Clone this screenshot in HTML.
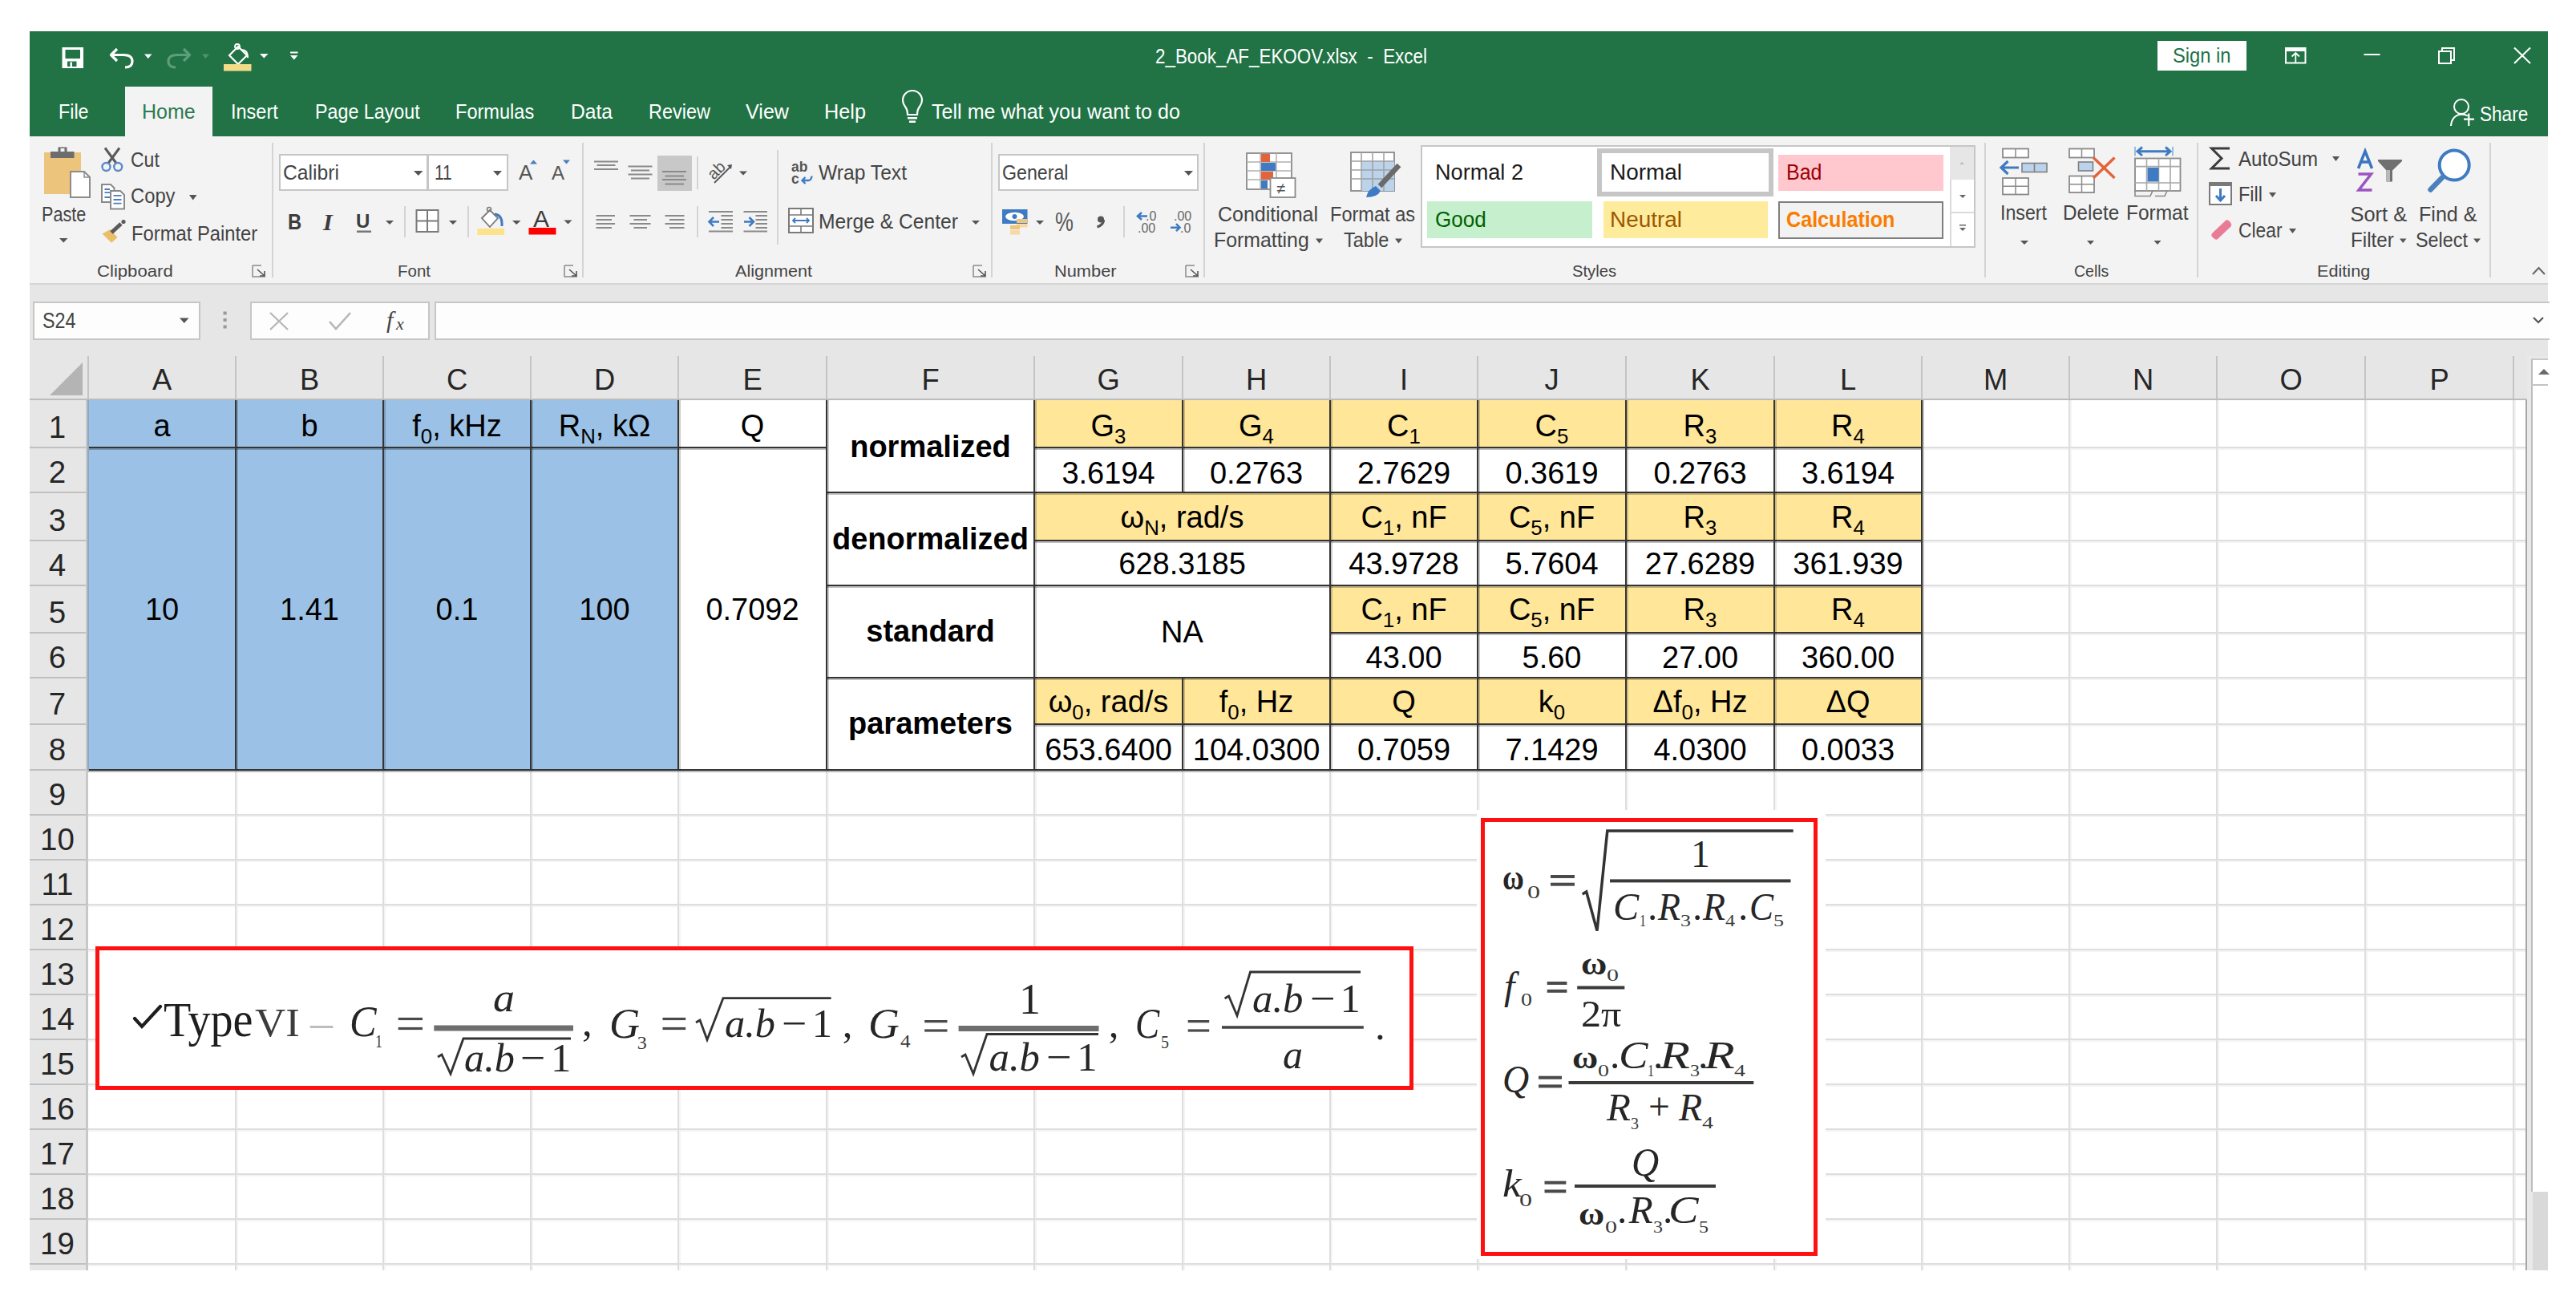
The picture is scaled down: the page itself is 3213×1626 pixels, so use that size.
<!DOCTYPE html>
<html><head><meta charset="utf-8"><style>
html,body{margin:0;padding:0}
body{width:3213px;height:1626px;position:relative;overflow:hidden;background:#fff;font-family:"Liberation Sans",sans-serif}
svg{position:absolute;overflow:visible}
</style></head><body>
<div style="position:absolute;left:37px;top:39px;width:3141px;height:131px;background:#217346;"></div>
<div style="position:absolute;left:156px;top:108px;width:109px;height:62px;background:#f3f3f3;"></div>
<div style="position:absolute;left:37px;top:170px;width:3141px;height:183px;background:#f3f3f3;"></div>
<div style="position:absolute;left:37px;top:353px;width:3141px;height:2px;background:#d5d5d5;"></div>
<div style="position:absolute;left:37px;top:355px;width:3141px;height:144px;background:#e6e6e6;"></div>
<div style="position:absolute;left:41px;top:376px;width:209px;height:48px;background:#fdfdfd;box-sizing:border-box;border:2px solid #c6c6c6"></div>
<div style="position:absolute;left:312px;top:376px;width:224px;height:48px;background:#fdfdfd;box-sizing:border-box;border:2px solid #c6c6c6"></div>
<div style="position:absolute;left:542px;top:376px;width:2638px;height:48px;background:#fdfdfd;box-sizing:border-box;border:2px solid #c6c6c6;border-right:none"></div>
<div style="position:absolute;left:110px;top:499px;width:3042px;height:1085px;background:#ffffff;"></div>
<div style="position:absolute;left:37px;top:499px;width:73px;height:1085px;background:#e6e6e6;"></div>
<div style="position:absolute;left:107px;top:499px;width:3px;height:1085px;background:#c8c8c8;"></div>
<div style="position:absolute;left:109px;top:444px;width:2px;height:55px;background:#c4c4c4;"></div>
<div style="position:absolute;left:293px;top:444px;width:2px;height:55px;background:#c4c4c4;"></div>
<div style="position:absolute;left:477px;top:444px;width:2px;height:55px;background:#c4c4c4;"></div>
<div style="position:absolute;left:661px;top:444px;width:2px;height:55px;background:#c4c4c4;"></div>
<div style="position:absolute;left:845px;top:444px;width:2px;height:55px;background:#c4c4c4;"></div>
<div style="position:absolute;left:1030px;top:444px;width:2px;height:55px;background:#c4c4c4;"></div>
<div style="position:absolute;left:1289px;top:444px;width:2px;height:55px;background:#c4c4c4;"></div>
<div style="position:absolute;left:1474px;top:444px;width:2px;height:55px;background:#c4c4c4;"></div>
<div style="position:absolute;left:1658px;top:444px;width:2px;height:55px;background:#c4c4c4;"></div>
<div style="position:absolute;left:1842px;top:444px;width:2px;height:55px;background:#c4c4c4;"></div>
<div style="position:absolute;left:2027px;top:444px;width:2px;height:55px;background:#c4c4c4;"></div>
<div style="position:absolute;left:2212px;top:444px;width:2px;height:55px;background:#c4c4c4;"></div>
<div style="position:absolute;left:2396px;top:444px;width:2px;height:55px;background:#c4c4c4;"></div>
<div style="position:absolute;left:2580px;top:444px;width:2px;height:55px;background:#c4c4c4;"></div>
<div style="position:absolute;left:2764px;top:444px;width:2px;height:55px;background:#c4c4c4;"></div>
<div style="position:absolute;left:2949px;top:444px;width:2px;height:55px;background:#c4c4c4;"></div>
<div style="position:absolute;left:3134px;top:444px;width:2px;height:55px;background:#c4c4c4;"></div>
<div style="position:absolute;left:37px;top:497px;width:3115px;height:2px;background:#bcbcbc;"></div>
<svg style="left:62px;top:452px" width="42" height="41"><path d="M41 0 L41 41 L0 41 Z" fill="#b4b4b4"/></svg>
<div style="position:absolute;left:295px;top:499px;width:2px;height:1085px;background:#f4f4f4;"></div>
<div style="position:absolute;left:479px;top:499px;width:2px;height:1085px;background:#f4f4f4;"></div>
<div style="position:absolute;left:663px;top:499px;width:2px;height:1085px;background:#f4f4f4;"></div>
<div style="position:absolute;left:847px;top:499px;width:2px;height:1085px;background:#f4f4f4;"></div>
<div style="position:absolute;left:1032px;top:499px;width:2px;height:1085px;background:#f4f4f4;"></div>
<div style="position:absolute;left:1291px;top:499px;width:2px;height:1085px;background:#f4f4f4;"></div>
<div style="position:absolute;left:1476px;top:499px;width:2px;height:1085px;background:#f4f4f4;"></div>
<div style="position:absolute;left:1660px;top:499px;width:2px;height:1085px;background:#f4f4f4;"></div>
<div style="position:absolute;left:1844px;top:499px;width:2px;height:1085px;background:#f4f4f4;"></div>
<div style="position:absolute;left:2029px;top:499px;width:2px;height:1085px;background:#f4f4f4;"></div>
<div style="position:absolute;left:2214px;top:499px;width:2px;height:1085px;background:#f4f4f4;"></div>
<div style="position:absolute;left:2398px;top:499px;width:2px;height:1085px;background:#f4f4f4;"></div>
<div style="position:absolute;left:2582px;top:499px;width:2px;height:1085px;background:#f4f4f4;"></div>
<div style="position:absolute;left:2766px;top:499px;width:2px;height:1085px;background:#f4f4f4;"></div>
<div style="position:absolute;left:2951px;top:499px;width:2px;height:1085px;background:#f4f4f4;"></div>
<div style="position:absolute;left:3136px;top:499px;width:2px;height:1085px;background:#f4f4f4;"></div>
<div style="position:absolute;left:110px;top:559px;width:3041px;height:2px;background:#f4f4f4;"></div>
<div style="position:absolute;left:110px;top:615px;width:3041px;height:2px;background:#f4f4f4;"></div>
<div style="position:absolute;left:110px;top:675px;width:3041px;height:2px;background:#f4f4f4;"></div>
<div style="position:absolute;left:110px;top:731px;width:3041px;height:2px;background:#f4f4f4;"></div>
<div style="position:absolute;left:110px;top:790px;width:3041px;height:2px;background:#f4f4f4;"></div>
<div style="position:absolute;left:110px;top:846px;width:3041px;height:2px;background:#f4f4f4;"></div>
<div style="position:absolute;left:110px;top:904px;width:3041px;height:2px;background:#f4f4f4;"></div>
<div style="position:absolute;left:110px;top:961px;width:3041px;height:2px;background:#f4f4f4;"></div>
<div style="position:absolute;left:110px;top:1017px;width:3041px;height:2px;background:#f4f4f4;"></div>
<div style="position:absolute;left:110px;top:1073px;width:3041px;height:2px;background:#f4f4f4;"></div>
<div style="position:absolute;left:110px;top:1129px;width:3041px;height:2px;background:#f4f4f4;"></div>
<div style="position:absolute;left:110px;top:1185px;width:3041px;height:2px;background:#f4f4f4;"></div>
<div style="position:absolute;left:110px;top:1241px;width:3041px;height:2px;background:#f4f4f4;"></div>
<div style="position:absolute;left:110px;top:1297px;width:3041px;height:2px;background:#f4f4f4;"></div>
<div style="position:absolute;left:110px;top:1353px;width:3041px;height:2px;background:#f4f4f4;"></div>
<div style="position:absolute;left:110px;top:1409px;width:3041px;height:2px;background:#f4f4f4;"></div>
<div style="position:absolute;left:110px;top:1465px;width:3041px;height:2px;background:#f4f4f4;"></div>
<div style="position:absolute;left:110px;top:1521px;width:3041px;height:2px;background:#f4f4f4;"></div>
<div style="position:absolute;left:110px;top:1577px;width:3041px;height:2px;background:#f4f4f4;"></div>
<div style="position:absolute;left:293px;top:499px;width:2px;height:1085px;background:#dedede;"></div>
<div style="position:absolute;left:477px;top:499px;width:2px;height:1085px;background:#dedede;"></div>
<div style="position:absolute;left:661px;top:499px;width:2px;height:1085px;background:#dedede;"></div>
<div style="position:absolute;left:845px;top:499px;width:2px;height:1085px;background:#dedede;"></div>
<div style="position:absolute;left:1030px;top:499px;width:2px;height:1085px;background:#dedede;"></div>
<div style="position:absolute;left:1289px;top:499px;width:2px;height:1085px;background:#dedede;"></div>
<div style="position:absolute;left:1474px;top:499px;width:2px;height:1085px;background:#dedede;"></div>
<div style="position:absolute;left:1658px;top:499px;width:2px;height:1085px;background:#dedede;"></div>
<div style="position:absolute;left:1842px;top:499px;width:2px;height:1085px;background:#dedede;"></div>
<div style="position:absolute;left:2027px;top:499px;width:2px;height:1085px;background:#dedede;"></div>
<div style="position:absolute;left:2212px;top:499px;width:2px;height:1085px;background:#dedede;"></div>
<div style="position:absolute;left:2396px;top:499px;width:2px;height:1085px;background:#dedede;"></div>
<div style="position:absolute;left:2580px;top:499px;width:2px;height:1085px;background:#dedede;"></div>
<div style="position:absolute;left:2764px;top:499px;width:2px;height:1085px;background:#dedede;"></div>
<div style="position:absolute;left:2949px;top:499px;width:2px;height:1085px;background:#dedede;"></div>
<div style="position:absolute;left:3134px;top:499px;width:2px;height:1085px;background:#dedede;"></div>
<div style="position:absolute;left:110px;top:557px;width:3041px;height:2px;background:#dedede;"></div>
<div style="position:absolute;left:110px;top:613px;width:3041px;height:2px;background:#dedede;"></div>
<div style="position:absolute;left:110px;top:673px;width:3041px;height:2px;background:#dedede;"></div>
<div style="position:absolute;left:110px;top:729px;width:3041px;height:2px;background:#dedede;"></div>
<div style="position:absolute;left:110px;top:788px;width:3041px;height:2px;background:#dedede;"></div>
<div style="position:absolute;left:110px;top:844px;width:3041px;height:2px;background:#dedede;"></div>
<div style="position:absolute;left:110px;top:902px;width:3041px;height:2px;background:#dedede;"></div>
<div style="position:absolute;left:110px;top:959px;width:3041px;height:2px;background:#dedede;"></div>
<div style="position:absolute;left:110px;top:1015px;width:3041px;height:2px;background:#dedede;"></div>
<div style="position:absolute;left:110px;top:1071px;width:3041px;height:2px;background:#dedede;"></div>
<div style="position:absolute;left:110px;top:1127px;width:3041px;height:2px;background:#dedede;"></div>
<div style="position:absolute;left:110px;top:1183px;width:3041px;height:2px;background:#dedede;"></div>
<div style="position:absolute;left:110px;top:1239px;width:3041px;height:2px;background:#dedede;"></div>
<div style="position:absolute;left:110px;top:1295px;width:3041px;height:2px;background:#dedede;"></div>
<div style="position:absolute;left:110px;top:1351px;width:3041px;height:2px;background:#dedede;"></div>
<div style="position:absolute;left:110px;top:1407px;width:3041px;height:2px;background:#dedede;"></div>
<div style="position:absolute;left:110px;top:1463px;width:3041px;height:2px;background:#dedede;"></div>
<div style="position:absolute;left:110px;top:1519px;width:3041px;height:2px;background:#dedede;"></div>
<div style="position:absolute;left:110px;top:1575px;width:3041px;height:2px;background:#dedede;"></div>
<div style="position:absolute;left:37px;top:557px;width:70px;height:2px;background:#c0c0c0;"></div>
<div style="position:absolute;left:37px;top:613px;width:70px;height:2px;background:#c0c0c0;"></div>
<div style="position:absolute;left:37px;top:673px;width:70px;height:2px;background:#c0c0c0;"></div>
<div style="position:absolute;left:37px;top:729px;width:70px;height:2px;background:#c0c0c0;"></div>
<div style="position:absolute;left:37px;top:788px;width:70px;height:2px;background:#c0c0c0;"></div>
<div style="position:absolute;left:37px;top:844px;width:70px;height:2px;background:#c0c0c0;"></div>
<div style="position:absolute;left:37px;top:902px;width:70px;height:2px;background:#c0c0c0;"></div>
<div style="position:absolute;left:37px;top:959px;width:70px;height:2px;background:#c0c0c0;"></div>
<div style="position:absolute;left:37px;top:1015px;width:70px;height:2px;background:#c0c0c0;"></div>
<div style="position:absolute;left:37px;top:1071px;width:70px;height:2px;background:#c0c0c0;"></div>
<div style="position:absolute;left:37px;top:1127px;width:70px;height:2px;background:#c0c0c0;"></div>
<div style="position:absolute;left:37px;top:1183px;width:70px;height:2px;background:#c0c0c0;"></div>
<div style="position:absolute;left:37px;top:1239px;width:70px;height:2px;background:#c0c0c0;"></div>
<div style="position:absolute;left:37px;top:1295px;width:70px;height:2px;background:#c0c0c0;"></div>
<div style="position:absolute;left:37px;top:1351px;width:70px;height:2px;background:#c0c0c0;"></div>
<div style="position:absolute;left:37px;top:1407px;width:70px;height:2px;background:#c0c0c0;"></div>
<div style="position:absolute;left:37px;top:1463px;width:70px;height:2px;background:#c0c0c0;"></div>
<div style="position:absolute;left:37px;top:1519px;width:70px;height:2px;background:#c0c0c0;"></div>
<div style="position:absolute;left:37px;top:1575px;width:70px;height:2px;background:#c0c0c0;"></div>
<div style="position:absolute;left:3150px;top:499px;width:2px;height:1085px;background:#a6a6a6;"></div>
<div style="position:absolute;left:3152px;top:444px;width:26px;height:1140px;background:#e9e9e9;"></div>
<div style="position:absolute;left:3157px;top:448px;width:21px;height:1038px;background:#ffffff;box-sizing:border-box;border-left:2px solid #bdbdbd"></div>
<div style="position:absolute;left:3157px;top:479px;width:21px;height:2px;background:#c4c4c4;"></div>
<div style="position:absolute;left:3157px;top:447px;width:21px;height:2px;background:#c8c8c8;"></div>
<div style="position:absolute;left:3159px;top:1486px;width:19px;height:98px;background:#d9d9d9;"></div>
<svg style="left:3166px;top:458px" width="14" height="10"><path d="M0 9 L7 2 L14 9 Z" fill="#6a6a6a"/></svg>
<div style="position:absolute;left:110px;top:499px;width:2287px;height:461px;background:#ffffff;"></div>
<div style="position:absolute;left:110px;top:499px;width:736px;height:461px;background:#9bc2e6;"></div>
<div style="position:absolute;left:1290px;top:499px;width:1107px;height:59px;background:#ffe699;"></div>
<div style="position:absolute;left:1290px;top:614px;width:1107px;height:60px;background:#ffe699;"></div>
<div style="position:absolute;left:1659px;top:730px;width:738px;height:59px;background:#ffe699;"></div>
<div style="position:absolute;left:1290px;top:845px;width:1107px;height:58px;background:#ffe699;"></div>
<div style="position:absolute;left:110px;top:559px;width:922px;height:2px;background:rgba(0,0,0,0.24);"></div>
<div style="position:absolute;left:110px;top:557px;width:922px;height:2px;background:#343434;"></div>
<div style="position:absolute;left:1290px;top:559px;width:1108px;height:2px;background:rgba(0,0,0,0.24);"></div>
<div style="position:absolute;left:1290px;top:557px;width:1108px;height:2px;background:#343434;"></div>
<div style="position:absolute;left:1031px;top:615px;width:1367px;height:2px;background:rgba(0,0,0,0.24);"></div>
<div style="position:absolute;left:1031px;top:613px;width:1367px;height:2px;background:#343434;"></div>
<div style="position:absolute;left:1290px;top:675px;width:1108px;height:2px;background:rgba(0,0,0,0.24);"></div>
<div style="position:absolute;left:1290px;top:673px;width:1108px;height:2px;background:#343434;"></div>
<div style="position:absolute;left:1031px;top:731px;width:1367px;height:2px;background:rgba(0,0,0,0.24);"></div>
<div style="position:absolute;left:1031px;top:729px;width:1367px;height:2px;background:#343434;"></div>
<div style="position:absolute;left:1659px;top:790px;width:739px;height:2px;background:rgba(0,0,0,0.24);"></div>
<div style="position:absolute;left:1659px;top:788px;width:739px;height:2px;background:#343434;"></div>
<div style="position:absolute;left:1031px;top:846px;width:1367px;height:2px;background:rgba(0,0,0,0.24);"></div>
<div style="position:absolute;left:1031px;top:844px;width:1367px;height:2px;background:#343434;"></div>
<div style="position:absolute;left:1290px;top:904px;width:1108px;height:2px;background:rgba(0,0,0,0.24);"></div>
<div style="position:absolute;left:1290px;top:902px;width:1108px;height:2px;background:#343434;"></div>
<div style="position:absolute;left:110px;top:961px;width:2288px;height:2px;background:rgba(0,0,0,0.24);"></div>
<div style="position:absolute;left:110px;top:959px;width:2288px;height:2px;background:#343434;"></div>
<div style="position:absolute;left:109px;top:499px;width:2px;height:462px;background:#8fa6bd;"></div>
<div style="position:absolute;left:295px;top:499px;width:2px;height:462px;background:rgba(0,0,0,0.2);"></div>
<div style="position:absolute;left:293px;top:499px;width:2px;height:462px;background:#343434;"></div>
<div style="position:absolute;left:479px;top:499px;width:2px;height:462px;background:rgba(0,0,0,0.2);"></div>
<div style="position:absolute;left:477px;top:499px;width:2px;height:462px;background:#343434;"></div>
<div style="position:absolute;left:663px;top:499px;width:2px;height:462px;background:rgba(0,0,0,0.2);"></div>
<div style="position:absolute;left:661px;top:499px;width:2px;height:462px;background:#343434;"></div>
<div style="position:absolute;left:847px;top:499px;width:2px;height:462px;background:rgba(0,0,0,0.2);"></div>
<div style="position:absolute;left:845px;top:499px;width:2px;height:462px;background:#343434;"></div>
<div style="position:absolute;left:1032px;top:499px;width:2px;height:462px;background:rgba(0,0,0,0.2);"></div>
<div style="position:absolute;left:1030px;top:499px;width:2px;height:462px;background:#343434;"></div>
<div style="position:absolute;left:1291px;top:499px;width:2px;height:462px;background:rgba(0,0,0,0.2);"></div>
<div style="position:absolute;left:1289px;top:499px;width:2px;height:462px;background:#343434;"></div>
<div style="position:absolute;left:1660px;top:499px;width:2px;height:462px;background:rgba(0,0,0,0.2);"></div>
<div style="position:absolute;left:1658px;top:499px;width:2px;height:462px;background:#343434;"></div>
<div style="position:absolute;left:1844px;top:499px;width:2px;height:462px;background:rgba(0,0,0,0.2);"></div>
<div style="position:absolute;left:1842px;top:499px;width:2px;height:462px;background:#343434;"></div>
<div style="position:absolute;left:2029px;top:499px;width:2px;height:462px;background:rgba(0,0,0,0.2);"></div>
<div style="position:absolute;left:2027px;top:499px;width:2px;height:462px;background:#343434;"></div>
<div style="position:absolute;left:2214px;top:499px;width:2px;height:462px;background:rgba(0,0,0,0.2);"></div>
<div style="position:absolute;left:2212px;top:499px;width:2px;height:462px;background:#343434;"></div>
<div style="position:absolute;left:2398px;top:499px;width:2px;height:462px;background:rgba(0,0,0,0.2);"></div>
<div style="position:absolute;left:2396px;top:499px;width:2px;height:462px;background:#343434;"></div>
<div style="position:absolute;left:1476px;top:499px;width:2px;height:116px;background:rgba(0,0,0,0.2);"></div>
<div style="position:absolute;left:1474px;top:499px;width:2px;height:116px;background:#343434;"></div>
<div style="position:absolute;left:1476px;top:845px;width:2px;height:116px;background:rgba(0,0,0,0.2);"></div>
<div style="position:absolute;left:1474px;top:845px;width:2px;height:116px;background:#343434;"></div>
<div style="position:absolute;left:119px;top:1180px;width:1644px;height:179px;background:#fff;box-sizing:border-box;border:5px solid #ff1010"></div>
<div style="position:absolute;left:1842px;top:1010px;width:435px;height:560px;background:#fff;"></div>
<div style="position:absolute;left:1847px;top:1020px;width:420px;height:546px;background:#fff;box-sizing:border-box;border:5px solid #ff1010"></div>
<div style="position:absolute;left:2691px;top:51px;width:111px;height:37px;background:#ffffff;"></div>
<div style="position:absolute;left:348px;top:192px;width:186px;height:46px;background:#ffffff;box-sizing:border-box;border:2px solid #c6c6c6"></div>
<div style="position:absolute;left:533px;top:192px;width:101px;height:46px;background:#ffffff;box-sizing:border-box;border:2px solid #c6c6c6"></div>
<div style="position:absolute;left:1245px;top:192px;width:250px;height:46px;background:#ffffff;box-sizing:border-box;border:2px solid #c6c6c6"></div>
<div style="position:absolute;left:1772px;top:181px;width:692px;height:128px;background:#ffffff;box-sizing:border-box;border:2px solid #c6c6c6"></div>
<div style="position:absolute;left:1992px;top:185px;width:220px;height:60px;background:#ffffff;box-sizing:border-box;border:6px solid #c6c6c6"></div>
<div style="position:absolute;left:2218px;top:193px;width:206px;height:45px;background:#ffc7ce;"></div>
<div style="position:absolute;left:1780px;top:251px;width:206px;height:46px;background:#c6efce;"></div>
<div style="position:absolute;left:2000px;top:251px;width:205px;height:46px;background:#ffeb9c;"></div>
<div style="position:absolute;left:2218px;top:251px;width:206px;height:47px;background:#f2f2f2;box-sizing:border-box;border:2px solid #7f7f7f"></div>
<div style="position:absolute;left:2432px;top:183px;width:30px;height:41px;background:#e6e6e6;"></div>
<div style="position:absolute;left:2432px;top:224px;width:2px;height:83px;background:#dadada;"></div>
<div style="position:absolute;left:2434px;top:264px;width:28px;height:2px;background:#dadada;"></div>
<div style="position:absolute;left:339px;top:178px;width:2px;height:168px;background:#d4d4d4;"></div>
<div style="position:absolute;left:726px;top:178px;width:2px;height:168px;background:#d4d4d4;"></div>
<div style="position:absolute;left:1236px;top:178px;width:2px;height:168px;background:#d4d4d4;"></div>
<div style="position:absolute;left:1501px;top:178px;width:2px;height:168px;background:#d4d4d4;"></div>
<div style="position:absolute;left:2475px;top:178px;width:2px;height:168px;background:#d4d4d4;"></div>
<div style="position:absolute;left:2740px;top:178px;width:2px;height:168px;background:#d4d4d4;"></div>
<div style="position:absolute;left:3105px;top:178px;width:2px;height:168px;background:#d4d4d4;"></div>
<div style="position:absolute;left:869px;top:195px;width:2px;height:41px;background:#d4d4d4;"></div>
<div style="position:absolute;left:869px;top:257px;width:2px;height:39px;background:#d4d4d4;"></div>
<div style="position:absolute;left:969px;top:187px;width:2px;height:118px;background:#d4d4d4;"></div>
<div style="position:absolute;left:504px;top:257px;width:2px;height:39px;background:#d4d4d4;"></div>
<div style="position:absolute;left:583px;top:257px;width:2px;height:39px;background:#d4d4d4;"></div>
<div style="position:absolute;left:1401px;top:257px;width:2px;height:39px;background:#d4d4d4;"></div>
<div style="position:absolute;left:820px;top:194px;width:43px;height:44px;background:#c8c8c8;"></div>
<div style="position:absolute;left:189.9px;top:455.6px;font-family:'Liberation Sans';font-size:36.34px;line-height:1;white-space:nowrap;font-weight:400;font-style:normal;color:#262626;">A</div>
<div style="position:absolute;left:373.9px;top:455.6px;font-family:'Liberation Sans';font-size:36.34px;line-height:1;white-space:nowrap;font-weight:400;font-style:normal;color:#262626;">B</div>
<div style="position:absolute;left:556.9px;top:455.6px;font-family:'Liberation Sans';font-size:36.34px;line-height:1;white-space:nowrap;font-weight:400;font-style:normal;color:#262626;">C</div>
<div style="position:absolute;left:740.9px;top:455.6px;font-family:'Liberation Sans';font-size:36.34px;line-height:1;white-space:nowrap;font-weight:400;font-style:normal;color:#262626;">D</div>
<div style="position:absolute;left:926.4px;top:455.6px;font-family:'Liberation Sans';font-size:36.34px;line-height:1;white-space:nowrap;font-weight:400;font-style:normal;color:#262626;">E</div>
<div style="position:absolute;left:1149.4px;top:455.6px;font-family:'Liberation Sans';font-size:36.34px;line-height:1;white-space:nowrap;font-weight:400;font-style:normal;color:#262626;">F</div>
<div style="position:absolute;left:1368.4px;top:455.6px;font-family:'Liberation Sans';font-size:36.34px;line-height:1;white-space:nowrap;font-weight:400;font-style:normal;color:#262626;">G</div>
<div style="position:absolute;left:1553.9px;top:455.6px;font-family:'Liberation Sans';font-size:36.34px;line-height:1;white-space:nowrap;font-weight:400;font-style:normal;color:#262626;">H</div>
<div style="position:absolute;left:1745.9px;top:455.6px;font-family:'Liberation Sans';font-size:36.34px;line-height:1;white-space:nowrap;font-weight:400;font-style:normal;color:#262626;">I</div>
<div style="position:absolute;left:1926.4px;top:455.6px;font-family:'Liberation Sans';font-size:36.34px;line-height:1;white-space:nowrap;font-weight:400;font-style:normal;color:#262626;">J</div>
<div style="position:absolute;left:2108.4px;top:455.6px;font-family:'Liberation Sans';font-size:36.34px;line-height:1;white-space:nowrap;font-weight:400;font-style:normal;color:#262626;">K</div>
<div style="position:absolute;left:2294.9px;top:455.6px;font-family:'Liberation Sans';font-size:36.34px;line-height:1;white-space:nowrap;font-weight:400;font-style:normal;color:#262626;">L</div>
<div style="position:absolute;left:2473.9px;top:455.6px;font-family:'Liberation Sans';font-size:36.34px;line-height:1;white-space:nowrap;font-weight:400;font-style:normal;color:#262626;">M</div>
<div style="position:absolute;left:2659.9px;top:455.6px;font-family:'Liberation Sans';font-size:36.34px;line-height:1;white-space:nowrap;font-weight:400;font-style:normal;color:#262626;">N</div>
<div style="position:absolute;left:2843.4px;top:455.6px;font-family:'Liberation Sans';font-size:36.34px;line-height:1;white-space:nowrap;font-weight:400;font-style:normal;color:#262626;">O</div>
<div style="position:absolute;left:3030.4px;top:455.6px;font-family:'Liberation Sans';font-size:36.34px;line-height:1;white-space:nowrap;font-weight:400;font-style:normal;color:#262626;">P</div>
<div style="position:absolute;left:60.8px;top:514.3px;font-family:'Liberation Sans';font-size:38.52px;line-height:1;white-space:nowrap;font-weight:400;font-style:normal;color:#262626;">1</div>
<div style="position:absolute;left:60.8px;top:570.3px;font-family:'Liberation Sans';font-size:38.52px;line-height:1;white-space:nowrap;font-weight:400;font-style:normal;color:#262626;">2</div>
<div style="position:absolute;left:60.8px;top:630.3px;font-family:'Liberation Sans';font-size:38.52px;line-height:1;white-space:nowrap;font-weight:400;font-style:normal;color:#262626;">3</div>
<div style="position:absolute;left:60.8px;top:686.3px;font-family:'Liberation Sans';font-size:38.52px;line-height:1;white-space:nowrap;font-weight:400;font-style:normal;color:#262626;">4</div>
<div style="position:absolute;left:60.8px;top:745.3px;font-family:'Liberation Sans';font-size:38.52px;line-height:1;white-space:nowrap;font-weight:400;font-style:normal;color:#262626;">5</div>
<div style="position:absolute;left:60.8px;top:801.3px;font-family:'Liberation Sans';font-size:38.52px;line-height:1;white-space:nowrap;font-weight:400;font-style:normal;color:#262626;">6</div>
<div style="position:absolute;left:60.8px;top:859.3px;font-family:'Liberation Sans';font-size:38.52px;line-height:1;white-space:nowrap;font-weight:400;font-style:normal;color:#262626;">7</div>
<div style="position:absolute;left:60.8px;top:916.3px;font-family:'Liberation Sans';font-size:38.52px;line-height:1;white-space:nowrap;font-weight:400;font-style:normal;color:#262626;">8</div>
<div style="position:absolute;left:60.8px;top:972.3px;font-family:'Liberation Sans';font-size:38.52px;line-height:1;white-space:nowrap;font-weight:400;font-style:normal;color:#262626;">9</div>
<div style="position:absolute;left:50.1px;top:1028.3px;font-family:'Liberation Sans';font-size:38.52px;line-height:1;white-space:nowrap;font-weight:400;font-style:normal;color:#262626;">10</div>
<div style="position:absolute;left:51.5px;top:1084.3px;font-family:'Liberation Sans';font-size:38.52px;line-height:1;white-space:nowrap;font-weight:400;font-style:normal;color:#262626;">11</div>
<div style="position:absolute;left:50.1px;top:1140.3px;font-family:'Liberation Sans';font-size:38.52px;line-height:1;white-space:nowrap;font-weight:400;font-style:normal;color:#262626;">12</div>
<div style="position:absolute;left:50.1px;top:1196.3px;font-family:'Liberation Sans';font-size:38.52px;line-height:1;white-space:nowrap;font-weight:400;font-style:normal;color:#262626;">13</div>
<div style="position:absolute;left:50.1px;top:1252.3px;font-family:'Liberation Sans';font-size:38.52px;line-height:1;white-space:nowrap;font-weight:400;font-style:normal;color:#262626;">14</div>
<div style="position:absolute;left:50.1px;top:1308.3px;font-family:'Liberation Sans';font-size:38.52px;line-height:1;white-space:nowrap;font-weight:400;font-style:normal;color:#262626;">15</div>
<div style="position:absolute;left:50.1px;top:1364.3px;font-family:'Liberation Sans';font-size:38.52px;line-height:1;white-space:nowrap;font-weight:400;font-style:normal;color:#262626;">16</div>
<div style="position:absolute;left:50.1px;top:1420.3px;font-family:'Liberation Sans';font-size:38.52px;line-height:1;white-space:nowrap;font-weight:400;font-style:normal;color:#262626;">17</div>
<div style="position:absolute;left:50.1px;top:1476.3px;font-family:'Liberation Sans';font-size:38.52px;line-height:1;white-space:nowrap;font-weight:400;font-style:normal;color:#262626;">18</div>
<div style="position:absolute;left:50.1px;top:1532.3px;font-family:'Liberation Sans';font-size:38.52px;line-height:1;white-space:nowrap;font-weight:400;font-style:normal;color:#262626;">19</div>
<div style="position:absolute;left:191.4px;top:511.7px;font-family:'Liberation Sans';font-size:38.00px;line-height:1;white-space:nowrap;font-weight:400;font-style:normal;color:#000;">a</div>
<div style="position:absolute;left:375.4px;top:511.7px;font-family:'Liberation Sans';font-size:38.00px;line-height:1;white-space:nowrap;font-weight:400;font-style:normal;color:#000;">b</div>
<div style="position:absolute;left:514.2px;top:511.7px;font-family:'Liberation Sans';font-size:38.00px;line-height:1;white-space:nowrap;font-weight:400;font-style:normal;color:#000;">f<span style="font-size:0.68em;vertical-align:-0.33em">0</span>, kHz</div>
<div style="position:absolute;left:696.7px;top:511.7px;font-family:'Liberation Sans';font-size:38.00px;line-height:1;white-space:nowrap;font-weight:400;font-style:normal;color:#000;">R<span style="font-size:0.68em;vertical-align:-0.33em">N</span>, k&Omega;</div>
<div style="position:absolute;left:923.7px;top:511.7px;font-family:'Liberation Sans';font-size:38.00px;line-height:1;white-space:nowrap;font-weight:400;font-style:normal;color:#000;">Q</div>
<div style="position:absolute;left:180.9px;top:741.2px;font-family:'Liberation Sans';font-size:38.00px;line-height:1;white-space:nowrap;font-weight:400;font-style:normal;color:#000;">10</div>
<div style="position:absolute;left:349.0px;top:741.2px;font-family:'Liberation Sans';font-size:38.00px;line-height:1;white-space:nowrap;font-weight:400;font-style:normal;color:#000;">1.41</div>
<div style="position:absolute;left:543.6px;top:741.2px;font-family:'Liberation Sans';font-size:38.00px;line-height:1;white-space:nowrap;font-weight:400;font-style:normal;color:#000;">0.1</div>
<div style="position:absolute;left:722.3px;top:741.2px;font-family:'Liberation Sans';font-size:38.00px;line-height:1;white-space:nowrap;font-weight:400;font-style:normal;color:#000;">100</div>
<div style="position:absolute;left:880.4px;top:741.2px;font-family:'Liberation Sans';font-size:38.00px;line-height:1;white-space:nowrap;font-weight:400;font-style:normal;color:#000;">0.7092</div>
<div style="position:absolute;left:1060.2px;top:538.2px;font-family:'Liberation Sans';font-size:38.00px;line-height:1;white-space:nowrap;font-weight:700;font-style:normal;color:#000;">normalized</div>
<div style="position:absolute;left:1038.0px;top:653.2px;font-family:'Liberation Sans';font-size:38.00px;line-height:1;white-space:nowrap;font-weight:700;font-style:normal;color:#000;">denormalized</div>
<div style="position:absolute;left:1080.3px;top:768.2px;font-family:'Liberation Sans';font-size:38.00px;line-height:1;white-space:nowrap;font-weight:700;font-style:normal;color:#000;">standard</div>
<div style="position:absolute;left:1058.0px;top:883.2px;font-family:'Liberation Sans';font-size:38.00px;line-height:1;white-space:nowrap;font-weight:700;font-style:normal;color:#000;">parameters</div>
<div style="position:absolute;left:1360.5px;top:511.7px;font-family:'Liberation Sans';font-size:38.00px;line-height:1;white-space:nowrap;font-weight:400;font-style:normal;color:#000;">G<span style="font-size:0.68em;vertical-align:-0.33em">3</span></div>
<div style="position:absolute;left:1545.0px;top:511.7px;font-family:'Liberation Sans';font-size:38.00px;line-height:1;white-space:nowrap;font-weight:400;font-style:normal;color:#000;">G<span style="font-size:0.68em;vertical-align:-0.33em">4</span></div>
<div style="position:absolute;left:1730.1px;top:511.7px;font-family:'Liberation Sans';font-size:38.00px;line-height:1;white-space:nowrap;font-weight:400;font-style:normal;color:#000;">C<span style="font-size:0.68em;vertical-align:-0.33em">1</span></div>
<div style="position:absolute;left:1914.6px;top:511.7px;font-family:'Liberation Sans';font-size:38.00px;line-height:1;white-space:nowrap;font-weight:400;font-style:normal;color:#000;">C<span style="font-size:0.68em;vertical-align:-0.33em">5</span></div>
<div style="position:absolute;left:2099.6px;top:511.7px;font-family:'Liberation Sans';font-size:38.00px;line-height:1;white-space:nowrap;font-weight:400;font-style:normal;color:#000;">R<span style="font-size:0.68em;vertical-align:-0.33em">3</span></div>
<div style="position:absolute;left:2284.1px;top:511.7px;font-family:'Liberation Sans';font-size:38.00px;line-height:1;white-space:nowrap;font-weight:400;font-style:normal;color:#000;">R<span style="font-size:0.68em;vertical-align:-0.33em">4</span></div>
<div style="position:absolute;left:1324.4px;top:570.7px;font-family:'Liberation Sans';font-size:38.00px;line-height:1;white-space:nowrap;font-weight:400;font-style:normal;color:#000;">3.6194</div>
<div style="position:absolute;left:1508.9px;top:570.7px;font-family:'Liberation Sans';font-size:38.00px;line-height:1;white-space:nowrap;font-weight:400;font-style:normal;color:#000;">0.2763</div>
<div style="position:absolute;left:1692.9px;top:570.7px;font-family:'Liberation Sans';font-size:38.00px;line-height:1;white-space:nowrap;font-weight:400;font-style:normal;color:#000;">2.7629</div>
<div style="position:absolute;left:1877.4px;top:570.7px;font-family:'Liberation Sans';font-size:38.00px;line-height:1;white-space:nowrap;font-weight:400;font-style:normal;color:#000;">0.3619</div>
<div style="position:absolute;left:2062.4px;top:570.7px;font-family:'Liberation Sans';font-size:38.00px;line-height:1;white-space:nowrap;font-weight:400;font-style:normal;color:#000;">0.2763</div>
<div style="position:absolute;left:2246.9px;top:570.7px;font-family:'Liberation Sans';font-size:38.00px;line-height:1;white-space:nowrap;font-weight:400;font-style:normal;color:#000;">3.6194</div>
<div style="position:absolute;left:1397.5px;top:626.2px;font-family:'Liberation Sans';font-size:38.00px;line-height:1;white-space:nowrap;font-weight:400;font-style:normal;color:#000;">&omega;<span style="font-size:0.68em;vertical-align:-0.33em">N</span>, rad/s</div>
<div style="position:absolute;left:1697.4px;top:626.2px;font-family:'Liberation Sans';font-size:38.00px;line-height:1;white-space:nowrap;font-weight:400;font-style:normal;color:#000;">C<span style="font-size:0.68em;vertical-align:-0.33em">1</span>, nF</div>
<div style="position:absolute;left:1881.9px;top:626.2px;font-family:'Liberation Sans';font-size:38.00px;line-height:1;white-space:nowrap;font-weight:400;font-style:normal;color:#000;">C<span style="font-size:0.68em;vertical-align:-0.33em">5</span>, nF</div>
<div style="position:absolute;left:2099.6px;top:626.2px;font-family:'Liberation Sans';font-size:38.00px;line-height:1;white-space:nowrap;font-weight:400;font-style:normal;color:#000;">R<span style="font-size:0.68em;vertical-align:-0.33em">3</span></div>
<div style="position:absolute;left:2284.1px;top:626.2px;font-family:'Liberation Sans';font-size:38.00px;line-height:1;white-space:nowrap;font-weight:400;font-style:normal;color:#000;">R<span style="font-size:0.68em;vertical-align:-0.33em">4</span></div>
<div style="position:absolute;left:1395.3px;top:683.7px;font-family:'Liberation Sans';font-size:38.00px;line-height:1;white-space:nowrap;font-weight:400;font-style:normal;color:#000;">628.3185</div>
<div style="position:absolute;left:1682.3px;top:683.7px;font-family:'Liberation Sans';font-size:38.00px;line-height:1;white-space:nowrap;font-weight:400;font-style:normal;color:#000;">43.9728</div>
<div style="position:absolute;left:1877.4px;top:683.7px;font-family:'Liberation Sans';font-size:38.00px;line-height:1;white-space:nowrap;font-weight:400;font-style:normal;color:#000;">5.7604</div>
<div style="position:absolute;left:2051.8px;top:683.7px;font-family:'Liberation Sans';font-size:38.00px;line-height:1;white-space:nowrap;font-weight:400;font-style:normal;color:#000;">27.6289</div>
<div style="position:absolute;left:2236.3px;top:683.7px;font-family:'Liberation Sans';font-size:38.00px;line-height:1;white-space:nowrap;font-weight:400;font-style:normal;color:#000;">361.939</div>
<div style="position:absolute;left:1448.1px;top:768.7px;font-family:'Liberation Sans';font-size:38.00px;line-height:1;white-space:nowrap;font-weight:400;font-style:normal;color:#000;">NA</div>
<div style="position:absolute;left:1697.4px;top:741.2px;font-family:'Liberation Sans';font-size:38.00px;line-height:1;white-space:nowrap;font-weight:400;font-style:normal;color:#000;">C<span style="font-size:0.68em;vertical-align:-0.33em">1</span>, nF</div>
<div style="position:absolute;left:1881.9px;top:741.2px;font-family:'Liberation Sans';font-size:38.00px;line-height:1;white-space:nowrap;font-weight:400;font-style:normal;color:#000;">C<span style="font-size:0.68em;vertical-align:-0.33em">5</span>, nF</div>
<div style="position:absolute;left:2099.6px;top:741.2px;font-family:'Liberation Sans';font-size:38.00px;line-height:1;white-space:nowrap;font-weight:400;font-style:normal;color:#000;">R<span style="font-size:0.68em;vertical-align:-0.33em">3</span></div>
<div style="position:absolute;left:2284.1px;top:741.2px;font-family:'Liberation Sans';font-size:38.00px;line-height:1;white-space:nowrap;font-weight:400;font-style:normal;color:#000;">R<span style="font-size:0.68em;vertical-align:-0.33em">4</span></div>
<div style="position:absolute;left:1703.5px;top:801.2px;font-family:'Liberation Sans';font-size:38.00px;line-height:1;white-space:nowrap;font-weight:400;font-style:normal;color:#000;">43.00</div>
<div style="position:absolute;left:1898.5px;top:801.2px;font-family:'Liberation Sans';font-size:38.00px;line-height:1;white-space:nowrap;font-weight:400;font-style:normal;color:#000;">5.60</div>
<div style="position:absolute;left:2073.0px;top:801.2px;font-family:'Liberation Sans';font-size:38.00px;line-height:1;white-space:nowrap;font-weight:400;font-style:normal;color:#000;">27.00</div>
<div style="position:absolute;left:2246.9px;top:801.2px;font-family:'Liberation Sans';font-size:38.00px;line-height:1;white-space:nowrap;font-weight:400;font-style:normal;color:#000;">360.00</div>
<div style="position:absolute;left:1307.7px;top:856.2px;font-family:'Liberation Sans';font-size:38.00px;line-height:1;white-space:nowrap;font-weight:400;font-style:normal;color:#000;">&omega;<span style="font-size:0.68em;vertical-align:-0.33em">0</span>, rad/s</div>
<div style="position:absolute;left:1520.7px;top:856.2px;font-family:'Liberation Sans';font-size:38.00px;line-height:1;white-space:nowrap;font-weight:400;font-style:normal;color:#000;">f<span style="font-size:0.68em;vertical-align:-0.33em">0</span>, Hz</div>
<div style="position:absolute;left:1736.2px;top:856.2px;font-family:'Liberation Sans';font-size:38.00px;line-height:1;white-space:nowrap;font-weight:400;font-style:normal;color:#000;">Q</div>
<div style="position:absolute;left:1918.8px;top:856.2px;font-family:'Liberation Sans';font-size:38.00px;line-height:1;white-space:nowrap;font-weight:400;font-style:normal;color:#000;">k<span style="font-size:0.68em;vertical-align:-0.33em">0</span></div>
<div style="position:absolute;left:2061.6px;top:856.2px;font-family:'Liberation Sans';font-size:38.00px;line-height:1;white-space:nowrap;font-weight:400;font-style:normal;color:#000;">&Delta;f<span style="font-size:0.68em;vertical-align:-0.33em">0</span>, Hz</div>
<div style="position:absolute;left:2277.5px;top:856.2px;font-family:'Liberation Sans';font-size:38.00px;line-height:1;white-space:nowrap;font-weight:400;font-style:normal;color:#000;">&Delta;Q</div>
<div style="position:absolute;left:1303.3px;top:916.2px;font-family:'Liberation Sans';font-size:38.00px;line-height:1;white-space:nowrap;font-weight:400;font-style:normal;color:#000;">653.6400</div>
<div style="position:absolute;left:1487.8px;top:916.2px;font-family:'Liberation Sans';font-size:38.00px;line-height:1;white-space:nowrap;font-weight:400;font-style:normal;color:#000;">104.0300</div>
<div style="position:absolute;left:1692.9px;top:916.2px;font-family:'Liberation Sans';font-size:38.00px;line-height:1;white-space:nowrap;font-weight:400;font-style:normal;color:#000;">0.7059</div>
<div style="position:absolute;left:1877.4px;top:916.2px;font-family:'Liberation Sans';font-size:38.00px;line-height:1;white-space:nowrap;font-weight:400;font-style:normal;color:#000;">7.1429</div>
<div style="position:absolute;left:2062.4px;top:916.2px;font-family:'Liberation Sans';font-size:38.00px;line-height:1;white-space:nowrap;font-weight:400;font-style:normal;color:#000;">4.0300</div>
<div style="position:absolute;left:2246.9px;top:916.2px;font-family:'Liberation Sans';font-size:38.00px;line-height:1;white-space:nowrap;font-weight:400;font-style:normal;color:#000;">0.0033</div>
<div style="position:absolute;left:1441.0px;top:56.6px;font-family:'Liberation Sans';font-size:26.16px;line-height:1;white-space:nowrap;font-weight:400;font-style:normal;color:#ffffff;transform:scaleX(0.8560);transform-origin:left;">2_Book_AF_EKOOV.xlsx&nbsp;&nbsp;-&nbsp;&nbsp;Excel</div>
<div style="position:absolute;left:72.8px;top:125.8px;font-family:'Liberation Sans';font-size:26.16px;line-height:1;white-space:nowrap;font-weight:400;font-style:normal;color:#ffffff;transform:scaleX(0.8895);transform-origin:left;">File</div>
<div style="position:absolute;left:176.5px;top:125.8px;font-family:'Liberation Sans';font-size:26.16px;line-height:1;white-space:nowrap;font-weight:400;font-style:normal;color:#2b7a52;transform:scaleX(0.9565);transform-origin:left;">Home</div>
<div style="position:absolute;left:288.2px;top:125.8px;font-family:'Liberation Sans';font-size:26.16px;line-height:1;white-space:nowrap;font-weight:400;font-style:normal;color:#ffffff;transform:scaleX(0.8978);transform-origin:left;">Insert</div>
<div style="position:absolute;left:392.5px;top:125.8px;font-family:'Liberation Sans';font-size:26.16px;line-height:1;white-space:nowrap;font-weight:400;font-style:normal;color:#ffffff;transform:scaleX(0.8899);transform-origin:left;">Page Layout</div>
<div style="position:absolute;left:568.2px;top:125.8px;font-family:'Liberation Sans';font-size:26.16px;line-height:1;white-space:nowrap;font-weight:400;font-style:normal;color:#ffffff;transform:scaleX(0.9011);transform-origin:left;">Formulas</div>
<div style="position:absolute;left:712.0px;top:125.8px;font-family:'Liberation Sans';font-size:26.16px;line-height:1;white-space:nowrap;font-weight:400;font-style:normal;color:#ffffff;transform:scaleX(0.9409);transform-origin:left;">Data</div>
<div style="position:absolute;left:809.0px;top:125.8px;font-family:'Liberation Sans';font-size:26.16px;line-height:1;white-space:nowrap;font-weight:400;font-style:normal;color:#ffffff;transform:scaleX(0.8976);transform-origin:left;">Review</div>
<div style="position:absolute;left:930.0px;top:125.8px;font-family:'Liberation Sans';font-size:26.16px;line-height:1;white-space:nowrap;font-weight:400;font-style:normal;color:#ffffff;transform:scaleX(0.9602);transform-origin:left;">View</div>
<div style="position:absolute;left:1028.0px;top:125.8px;font-family:'Liberation Sans';font-size:26.16px;line-height:1;white-space:nowrap;font-weight:400;font-style:normal;color:#ffffff;transform:scaleX(0.9664);transform-origin:left;">Help</div>
<div style="position:absolute;left:1162.0px;top:125.5px;font-family:'Liberation Sans';font-size:26.16px;line-height:1;white-space:nowrap;font-weight:400;font-style:normal;color:#ffffff;transform:scaleX(0.9602);transform-origin:left;">Tell me what you want to do</div>
<div style="position:absolute;left:3093.4px;top:129.4px;font-family:'Liberation Sans';font-size:26.16px;line-height:1;white-space:nowrap;font-weight:400;font-style:normal;color:#ffffff;transform:scaleX(0.8622);transform-origin:left;">Share</div>
<div style="position:absolute;left:2710.0px;top:55.6px;font-family:'Liberation Sans';font-size:26.16px;line-height:1;white-space:nowrap;font-weight:400;font-style:normal;color:#217346;transform:scaleX(0.9063);transform-origin:left;">Sign in</div>
<div style="position:absolute;left:51.6px;top:254.8px;font-family:'Liberation Sans';font-size:25.44px;line-height:1;white-space:nowrap;font-weight:400;font-style:normal;color:#444444;transform:scaleX(0.8517);transform-origin:left;">Paste</div>
<div style="position:absolute;left:163.0px;top:187.0px;font-family:'Liberation Sans';font-size:25.44px;line-height:1;white-space:nowrap;font-weight:400;font-style:normal;color:#444444;transform:scaleX(0.9044);transform-origin:left;">Cut</div>
<div style="position:absolute;left:163.0px;top:232.2px;font-family:'Liberation Sans';font-size:25.44px;line-height:1;white-space:nowrap;font-weight:400;font-style:normal;color:#444444;transform:scaleX(0.9346);transform-origin:left;">Copy</div>
<div style="position:absolute;left:163.8px;top:278.9px;font-family:'Liberation Sans';font-size:25.44px;line-height:1;white-space:nowrap;font-weight:400;font-style:normal;color:#444444;transform:scaleX(0.9345);transform-origin:left;">Format Painter</div>
<div style="position:absolute;left:120.8px;top:327.1px;font-family:'Liberation Sans';font-size:21.08px;line-height:1;white-space:nowrap;font-weight:400;font-style:normal;color:#444444;transform:scaleX(1.0498);transform-origin:left;">Clipboard</div>
<div style="position:absolute;left:496.0px;top:327.1px;font-family:'Liberation Sans';font-size:21.08px;line-height:1;white-space:nowrap;font-weight:400;font-style:normal;color:#444444;transform:scaleX(0.9722);transform-origin:left;">Font</div>
<div style="position:absolute;left:917.0px;top:327.1px;font-family:'Liberation Sans';font-size:21.08px;line-height:1;white-space:nowrap;font-weight:400;font-style:normal;color:#444444;transform:scaleX(1.0243);transform-origin:left;">Alignment</div>
<div style="position:absolute;left:1315.0px;top:327.1px;font-family:'Liberation Sans';font-size:21.08px;line-height:1;white-space:nowrap;font-weight:400;font-style:normal;color:#444444;transform:scaleX(1.0339);transform-origin:left;">Number</div>
<div style="position:absolute;left:1961.0px;top:327.1px;font-family:'Liberation Sans';font-size:21.08px;line-height:1;white-space:nowrap;font-weight:400;font-style:normal;color:#444444;transform:scaleX(0.9583);transform-origin:left;">Styles</div>
<div style="position:absolute;left:2586.5px;top:327.1px;font-family:'Liberation Sans';font-size:21.08px;line-height:1;white-space:nowrap;font-weight:400;font-style:normal;color:#444444;transform:scaleX(0.9233);transform-origin:left;">Cells</div>
<div style="position:absolute;left:2890.2px;top:327.1px;font-family:'Liberation Sans';font-size:21.08px;line-height:1;white-space:nowrap;font-weight:400;font-style:normal;color:#444444;transform:scaleX(1.0281);transform-origin:left;">Editing</div>
<div style="position:absolute;left:352.5px;top:202.9px;font-family:'Liberation Sans';font-size:25.44px;line-height:1;white-space:nowrap;font-weight:400;font-style:normal;color:#444444;transform:scaleX(0.9710);transform-origin:left;">Calibri</div>
<div style="position:absolute;left:542.0px;top:202.9px;font-family:'Liberation Sans';font-size:25.44px;line-height:1;white-space:nowrap;font-weight:400;font-style:normal;color:#444444;transform:scaleX(0.8237);transform-origin:left;">11</div>
<div style="position:absolute;left:1021.0px;top:202.9px;font-family:'Liberation Sans';font-size:25.44px;line-height:1;white-space:nowrap;font-weight:400;font-style:normal;color:#444444;transform:scaleX(0.9686);transform-origin:left;">Wrap Text</div>
<div style="position:absolute;left:1021.0px;top:263.9px;font-family:'Liberation Sans';font-size:25.44px;line-height:1;white-space:nowrap;font-weight:400;font-style:normal;color:#444444;transform:scaleX(0.9691);transform-origin:left;">Merge &amp; Center</div>
<div style="position:absolute;left:1250.0px;top:202.9px;font-family:'Liberation Sans';font-size:25.44px;line-height:1;white-space:nowrap;font-weight:400;font-style:normal;color:#444444;transform:scaleX(0.9117);transform-origin:left;">General</div>
<div style="position:absolute;left:1519.0px;top:254.6px;font-family:'Liberation Sans';font-size:25.44px;line-height:1;white-space:nowrap;font-weight:400;font-style:normal;color:#444444;transform:scaleX(0.9822);transform-origin:left;">Conditional</div>
<div style="position:absolute;left:1513.8px;top:287.1px;font-family:'Liberation Sans';font-size:25.44px;line-height:1;white-space:nowrap;font-weight:400;font-style:normal;color:#444444;transform:scaleX(0.9768);transform-origin:left;">Formatting</div>
<div style="position:absolute;left:1659.0px;top:254.6px;font-family:'Liberation Sans';font-size:25.44px;line-height:1;white-space:nowrap;font-weight:400;font-style:normal;color:#444444;transform:scaleX(0.9258);transform-origin:left;">Format as</div>
<div style="position:absolute;left:1676.2px;top:287.1px;font-family:'Liberation Sans';font-size:25.44px;line-height:1;white-space:nowrap;font-weight:400;font-style:normal;color:#444444;transform:scaleX(0.9250);transform-origin:left;">Table</div>
<div style="position:absolute;left:1790.0px;top:201.0px;font-family:'Liberation Sans';font-size:27.62px;line-height:1;white-space:nowrap;font-weight:400;font-style:normal;color:#1a1a1a;transform:scaleX(0.9819);transform-origin:left;">Normal 2</div>
<div style="position:absolute;left:2007.5px;top:201.0px;font-family:'Liberation Sans';font-size:27.62px;line-height:1;white-space:nowrap;font-weight:400;font-style:normal;color:#1a1a1a;transform:scaleX(1.0113);transform-origin:left;">Normal</div>
<div style="position:absolute;left:2227.5px;top:201.0px;font-family:'Liberation Sans';font-size:27.62px;line-height:1;white-space:nowrap;font-weight:400;font-style:normal;color:#9c0006;transform:scaleX(0.9056);transform-origin:left;">Bad</div>
<div style="position:absolute;left:1790.0px;top:260.3px;font-family:'Liberation Sans';font-size:27.62px;line-height:1;white-space:nowrap;font-weight:400;font-style:normal;color:#006100;transform:scaleX(0.9436);transform-origin:left;">Good</div>
<div style="position:absolute;left:2007.5px;top:260.3px;font-family:'Liberation Sans';font-size:27.62px;line-height:1;white-space:nowrap;font-weight:400;font-style:normal;color:#9c5700;transform:scaleX(1.0109);transform-origin:left;">Neutral</div>
<div style="position:absolute;left:2227.5px;top:260.3px;font-family:'Liberation Sans';font-size:27.62px;line-height:1;white-space:nowrap;font-weight:700;font-style:normal;color:#fa7d00;transform:scaleX(0.9104);transform-origin:left;">Calculation</div>
<div style="position:absolute;left:2495.0px;top:253.4px;font-family:'Liberation Sans';font-size:25.44px;line-height:1;white-space:nowrap;font-weight:400;font-style:normal;color:#444444;transform:scaleX(0.9117);transform-origin:left;">Insert</div>
<div style="position:absolute;left:2572.5px;top:253.4px;font-family:'Liberation Sans';font-size:25.44px;line-height:1;white-space:nowrap;font-weight:400;font-style:normal;color:#444444;transform:scaleX(0.9554);transform-origin:left;">Delete</div>
<div style="position:absolute;left:2651.5px;top:253.4px;font-family:'Liberation Sans';font-size:25.44px;line-height:1;white-space:nowrap;font-weight:400;font-style:normal;color:#444444;transform:scaleX(0.9621);transform-origin:left;">Format</div>
<div style="position:absolute;left:2792.0px;top:185.9px;font-family:'Liberation Sans';font-size:25.44px;line-height:1;white-space:nowrap;font-weight:400;font-style:normal;color:#444444;transform:scaleX(0.9462);transform-origin:left;">AutoSum</div>
<div style="position:absolute;left:2792.0px;top:229.6px;font-family:'Liberation Sans';font-size:25.44px;line-height:1;white-space:nowrap;font-weight:400;font-style:normal;color:#444444;transform:scaleX(0.9233);transform-origin:left;">Fill</div>
<div style="position:absolute;left:2792.0px;top:274.6px;font-family:'Liberation Sans';font-size:25.44px;line-height:1;white-space:nowrap;font-weight:400;font-style:normal;color:#444444;transform:scaleX(0.8966);transform-origin:left;">Clear</div>
<div style="position:absolute;left:2931.5px;top:254.6px;font-family:'Liberation Sans';font-size:25.44px;line-height:1;white-space:nowrap;font-weight:400;font-style:normal;color:#444444;">Sort &amp;</div>
<div style="position:absolute;left:2931.5px;top:287.1px;font-family:'Liberation Sans';font-size:25.44px;line-height:1;white-space:nowrap;font-weight:400;font-style:normal;color:#444444;transform:scaleX(0.9509);transform-origin:left;">Filter</div>
<div style="position:absolute;left:3016.5px;top:254.6px;font-family:'Liberation Sans';font-size:25.44px;line-height:1;white-space:nowrap;font-weight:400;font-style:normal;color:#444444;transform:scaleX(0.9862);transform-origin:left;">Find &amp;</div>
<div style="position:absolute;left:3012.8px;top:287.1px;font-family:'Liberation Sans';font-size:25.44px;line-height:1;white-space:nowrap;font-weight:400;font-style:normal;color:#444444;transform:scaleX(0.9194);transform-origin:left;">Select</div>
<div style="position:absolute;left:53.0px;top:386.8px;font-family:'Liberation Sans';font-size:26.89px;line-height:1;white-space:nowrap;font-weight:400;font-style:normal;color:#444444;transform:scaleX(0.8674);transform-origin:left;">S24</div>
<div style="position:absolute;left:203.5px;top:1240.7px;font-family:'Liberation Serif';font-size:61.23px;line-height:1;white-space:nowrap;font-weight:400;font-style:normal;color:#1e1e1e;transform:scaleX(0.9174);transform-origin:left;">Type</div>
<div style="position:absolute;left:318.2px;top:1248.7px;font-family:'Liberation Serif';font-size:51.54px;line-height:1;white-space:nowrap;font-weight:400;font-style:normal;color:#3c3c3c;transform:scaleX(1.0259);transform-origin:left;">VI</div>
<div style="position:absolute;left:436.0px;top:1248.3px;font-family:'Liberation Serif';font-size:53.85px;line-height:1;white-space:nowrap;font-weight:400;font-style:italic;color:#262626;transform:scaleX(0.9355);transform-origin:left;">C</div>
<div style="position:absolute;left:468.0px;top:1286.1px;font-family:'Liberation Serif';font-size:24.00px;line-height:1;white-space:nowrap;font-weight:400;font-style:normal;color:#3a3a3a;transform:scaleX(0.7500);transform-origin:left;">1</div>
<div style="position:absolute;left:614.6px;top:1218.9px;font-family:'Liberation Serif';font-size:50.77px;line-height:1;white-space:nowrap;font-weight:400;font-style:italic;color:#262626;transform:scaleX(1.0636);transform-origin:left;">a</div>
<div style="position:absolute;left:578.5px;top:1293.9px;font-family:'Liberation Serif';font-size:50.77px;line-height:1;white-space:nowrap;font-weight:400;font-style:italic;color:#262626;transform:scaleX(0.9919);transform-origin:left;">a.b</div>
<div style="position:absolute;left:649.4px;top:1293.9px;font-family:'Liberation Serif';font-size:50.77px;line-height:1;white-space:nowrap;font-weight:400;font-style:normal;color:#262626;transform:scaleX(1.0991);transform-origin:left;">&#8722;</div>
<div style="position:absolute;left:687.1px;top:1293.9px;font-family:'Liberation Serif';font-size:50.77px;line-height:1;white-space:nowrap;font-weight:400;font-style:normal;color:#262626;">1</div>
<div style="position:absolute;left:726.0px;top:1248.9px;font-family:'Liberation Serif';font-size:50.77px;line-height:1;white-space:nowrap;font-weight:400;font-style:normal;color:#262626;">,</div>
<div style="position:absolute;left:759.6px;top:1249.6px;font-family:'Liberation Serif';font-size:52.31px;line-height:1;white-space:nowrap;font-weight:400;font-style:italic;color:#262626;transform:scaleX(1.0112);transform-origin:left;">G</div>
<div style="position:absolute;left:794.7px;top:1287.6px;font-family:'Liberation Serif';font-size:24.00px;line-height:1;white-space:nowrap;font-weight:400;font-style:normal;color:#3a3a3a;">3</div>
<div style="position:absolute;left:904.0px;top:1250.9px;font-family:'Liberation Serif';font-size:50.77px;line-height:1;white-space:nowrap;font-weight:400;font-style:italic;color:#262626;transform:scaleX(0.9927);transform-origin:left;">a.b</div>
<div style="position:absolute;left:974.9px;top:1250.9px;font-family:'Liberation Serif';font-size:50.77px;line-height:1;white-space:nowrap;font-weight:400;font-style:normal;color:#262626;transform:scaleX(1.1000);transform-origin:left;">&#8722;</div>
<div style="position:absolute;left:1012.7px;top:1250.9px;font-family:'Liberation Serif';font-size:50.77px;line-height:1;white-space:nowrap;font-weight:400;font-style:normal;color:#262626;">1</div>
<div style="position:absolute;left:1050.8px;top:1250.9px;font-family:'Liberation Serif';font-size:50.77px;line-height:1;white-space:nowrap;font-weight:400;font-style:normal;color:#262626;">,</div>
<div style="position:absolute;left:1082.6px;top:1249.6px;font-family:'Liberation Serif';font-size:52.31px;line-height:1;white-space:nowrap;font-weight:400;font-style:italic;color:#262626;transform:scaleX(1.0271);transform-origin:left;">G</div>
<div style="position:absolute;left:1123.0px;top:1285.5px;font-family:'Liberation Serif';font-size:24.00px;line-height:1;white-space:nowrap;font-weight:400;font-style:normal;color:#3a3a3a;transform:scaleX(1.0500);transform-origin:left;">4</div>
<div style="position:absolute;left:1271.0px;top:1220.3px;font-family:'Liberation Serif';font-size:53.85px;line-height:1;white-space:nowrap;font-weight:400;font-style:normal;color:#262626;">1</div>
<div style="position:absolute;left:1233.5px;top:1293.4px;font-family:'Liberation Serif';font-size:50.77px;line-height:1;white-space:nowrap;font-weight:400;font-style:italic;color:#262626;">a.b</div>
<div style="position:absolute;left:1305.1px;top:1293.4px;font-family:'Liberation Serif';font-size:50.77px;line-height:1;white-space:nowrap;font-weight:400;font-style:normal;color:#262626;transform:scaleX(1.1105);transform-origin:left;">&#8722;</div>
<div style="position:absolute;left:1343.3px;top:1293.4px;font-family:'Liberation Serif';font-size:50.77px;line-height:1;white-space:nowrap;font-weight:400;font-style:normal;color:#262626;">1</div>
<div style="position:absolute;left:1382.8px;top:1250.9px;font-family:'Liberation Serif';font-size:50.77px;line-height:1;white-space:nowrap;font-weight:400;font-style:normal;color:#262626;">,</div>
<div style="position:absolute;left:1416.4px;top:1249.6px;font-family:'Liberation Serif';font-size:52.31px;line-height:1;white-space:nowrap;font-weight:400;font-style:italic;color:#262626;transform:scaleX(0.8656);transform-origin:left;">C</div>
<div style="position:absolute;left:1448.0px;top:1287.1px;font-family:'Liberation Serif';font-size:24.00px;line-height:1;white-space:nowrap;font-weight:400;font-style:normal;color:#3a3a3a;transform:scaleX(0.8333);transform-origin:left;">5</div>
<div style="position:absolute;left:1562.0px;top:1219.9px;font-family:'Liberation Serif';font-size:50.77px;line-height:1;white-space:nowrap;font-weight:400;font-style:italic;color:#262626;">a.b</div>
<div style="position:absolute;left:1633.5px;top:1219.9px;font-family:'Liberation Serif';font-size:50.77px;line-height:1;white-space:nowrap;font-weight:400;font-style:normal;color:#262626;transform:scaleX(1.1087);transform-origin:left;">&#8722;</div>
<div style="position:absolute;left:1671.6px;top:1219.9px;font-family:'Liberation Serif';font-size:50.77px;line-height:1;white-space:nowrap;font-weight:400;font-style:normal;color:#262626;">1</div>
<div style="position:absolute;left:1600.0px;top:1289.9px;font-family:'Liberation Serif';font-size:50.77px;line-height:1;white-space:nowrap;font-weight:400;font-style:italic;color:#262626;transform:scaleX(0.9848);transform-origin:left;">a</div>
<div style="position:absolute;left:1715.0px;top:1253.9px;font-family:'Liberation Serif';font-size:50.77px;line-height:1;white-space:nowrap;font-weight:400;font-style:normal;color:#262626;">.</div>
<div style="position:absolute;left:1873.8px;top:1072.5px;font-family:'Liberation Serif';font-size:44.00px;line-height:1;white-space:nowrap;font-weight:700;font-style:normal;color:#262626;transform:scaleX(0.8362);transform-origin:left;">&omega;</div>
<div style="position:absolute;left:1905.0px;top:1100.7px;font-family:'Liberation Serif';font-size:23.00px;line-height:1;white-space:nowrap;font-weight:400;font-style:normal;color:#3a3a3a;transform:scaleX(1.3913);transform-origin:left;">0</div>
<div style="position:absolute;left:2109.0px;top:1042.4px;font-family:'Liberation Serif';font-size:47.69px;line-height:1;white-space:nowrap;font-weight:400;font-style:normal;color:#262626;">1</div>
<div style="position:absolute;left:2012.3px;top:1105.8px;font-family:'Liberation Serif';font-size:49.23px;line-height:1;white-space:nowrap;font-weight:400;font-style:italic;color:#262626;transform:scaleX(0.9806);transform-origin:left;">C</div>
<div style="position:absolute;left:2044.5px;top:1137.0px;font-family:'Liberation Serif';font-size:22.00px;line-height:1;white-space:nowrap;font-weight:400;font-style:normal;color:#3a3a3a;transform:scaleX(0.7273);transform-origin:left;">1</div>
<div style="position:absolute;left:2055.0px;top:1105.8px;font-family:'Liberation Serif';font-size:49.23px;line-height:1;white-space:nowrap;font-weight:400;font-style:normal;color:#262626;">.</div>
<div style="position:absolute;left:2068.0px;top:1105.8px;font-family:'Liberation Serif';font-size:49.23px;line-height:1;white-space:nowrap;font-weight:400;font-style:italic;color:#262626;transform:scaleX(0.9309);transform-origin:left;">R</div>
<div style="position:absolute;left:2096.0px;top:1137.0px;font-family:'Liberation Serif';font-size:22.00px;line-height:1;white-space:nowrap;font-weight:400;font-style:normal;color:#3a3a3a;transform:scaleX(1.1818);transform-origin:left;">3</div>
<div style="position:absolute;left:2111.0px;top:1105.8px;font-family:'Liberation Serif';font-size:49.23px;line-height:1;white-space:nowrap;font-weight:400;font-style:normal;color:#262626;">.</div>
<div style="position:absolute;left:2124.0px;top:1105.8px;font-family:'Liberation Serif';font-size:49.23px;line-height:1;white-space:nowrap;font-weight:400;font-style:italic;color:#262626;transform:scaleX(0.9309);transform-origin:left;">R</div>
<div style="position:absolute;left:2152.0px;top:1137.0px;font-family:'Liberation Serif';font-size:22.00px;line-height:1;white-space:nowrap;font-weight:400;font-style:normal;color:#3a3a3a;transform:scaleX(1.0909);transform-origin:left;">4</div>
<div style="position:absolute;left:2168.0px;top:1105.8px;font-family:'Liberation Serif';font-size:49.23px;line-height:1;white-space:nowrap;font-weight:400;font-style:normal;color:#262626;">.</div>
<div style="position:absolute;left:2182.0px;top:1105.8px;font-family:'Liberation Serif';font-size:49.23px;line-height:1;white-space:nowrap;font-weight:400;font-style:italic;color:#262626;transform:scaleX(0.9136);transform-origin:left;">C</div>
<div style="position:absolute;left:2212.0px;top:1137.0px;font-family:'Liberation Serif';font-size:22.00px;line-height:1;white-space:nowrap;font-weight:400;font-style:normal;color:#3a3a3a;transform:scaleX(1.1818);transform-origin:left;">5</div>
<div style="position:absolute;left:1876.0px;top:1206.2px;font-family:'Liberation Serif';font-size:48.00px;line-height:1;white-space:nowrap;font-weight:400;font-style:italic;color:#262626;">f</div>
<div style="position:absolute;left:1897.0px;top:1234.9px;font-family:'Liberation Serif';font-size:23.00px;line-height:1;white-space:nowrap;font-weight:400;font-style:normal;color:#3a3a3a;transform:scaleX(1.2174);transform-origin:left;">0</div>
<div style="position:absolute;left:1971.5px;top:1182.2px;font-family:'Liberation Serif';font-size:40.00px;line-height:1;white-space:nowrap;font-weight:700;font-style:normal;color:#262626;transform:scaleX(1.1045);transform-origin:left;">&omega;</div>
<div style="position:absolute;left:2003.8px;top:1204.7px;font-family:'Liberation Serif';font-size:22.00px;line-height:1;white-space:nowrap;font-weight:400;font-style:normal;color:#3a3a3a;transform:scaleX(1.3636);transform-origin:left;">0</div>
<div style="position:absolute;left:1971.5px;top:1241.5px;font-family:'Liberation Serif';font-size:46.15px;line-height:1;white-space:nowrap;font-weight:400;font-style:normal;color:#262626;transform:scaleX(1.0887);transform-origin:left;">2&pi;</div>
<div style="position:absolute;left:1873.8px;top:1321.1px;font-family:'Liberation Serif';font-size:49.23px;line-height:1;white-space:nowrap;font-weight:400;font-style:italic;color:#262626;transform:scaleX(0.9338);transform-origin:left;">Q</div>
<div style="position:absolute;left:1960.8px;top:1298.7px;font-family:'Liberation Serif';font-size:40.00px;line-height:1;white-space:nowrap;font-weight:700;font-style:normal;color:#262626;transform:scaleX(1.1011);transform-origin:left;">&omega;</div>
<div style="position:absolute;left:1993.0px;top:1324.3px;font-family:'Liberation Serif';font-size:22.00px;line-height:1;white-space:nowrap;font-weight:400;font-style:normal;color:#3a3a3a;transform:scaleX(1.2727);transform-origin:left;">0</div>
<div style="position:absolute;left:2008.0px;top:1291.0px;font-family:'Liberation Serif';font-size:49.23px;line-height:1;white-space:nowrap;font-weight:400;font-style:normal;color:#262626;">.</div>
<div style="position:absolute;left:2018.8px;top:1291.0px;font-family:'Liberation Serif';font-size:49.23px;line-height:1;white-space:nowrap;font-weight:400;font-style:italic;color:#262626;transform:scaleX(1.1115);transform-origin:left;">C</div>
<div style="position:absolute;left:2055.0px;top:1324.3px;font-family:'Liberation Serif';font-size:22.00px;line-height:1;white-space:nowrap;font-weight:400;font-style:normal;color:#3a3a3a;transform:scaleX(0.7273);transform-origin:left;">1</div>
<div style="position:absolute;left:2062.0px;top:1291.0px;font-family:'Liberation Serif';font-size:49.23px;line-height:1;white-space:nowrap;font-weight:400;font-style:normal;color:#262626;">.</div>
<div style="position:absolute;left:2070.0px;top:1291.0px;font-family:'Liberation Serif';font-size:49.23px;line-height:1;white-space:nowrap;font-weight:400;font-style:italic;color:#262626;transform:scaleX(1.2634);transform-origin:left;">R</div>
<div style="position:absolute;left:2108.0px;top:1324.3px;font-family:'Liberation Serif';font-size:22.00px;line-height:1;white-space:nowrap;font-weight:400;font-style:normal;color:#3a3a3a;transform:scaleX(1.0909);transform-origin:left;">3</div>
<div style="position:absolute;left:2118.0px;top:1291.0px;font-family:'Liberation Serif';font-size:49.23px;line-height:1;white-space:nowrap;font-weight:400;font-style:normal;color:#262626;">.</div>
<div style="position:absolute;left:2126.0px;top:1291.0px;font-family:'Liberation Serif';font-size:49.23px;line-height:1;white-space:nowrap;font-weight:400;font-style:italic;color:#262626;transform:scaleX(1.2535);transform-origin:left;">R</div>
<div style="position:absolute;left:2163.0px;top:1324.3px;font-family:'Liberation Serif';font-size:22.00px;line-height:1;white-space:nowrap;font-weight:400;font-style:normal;color:#3a3a3a;transform:scaleX(1.2727);transform-origin:left;">4</div>
<div style="position:absolute;left:2003.8px;top:1357.8px;font-family:'Liberation Serif';font-size:47.69px;line-height:1;white-space:nowrap;font-weight:400;font-style:italic;color:#262626;transform:scaleX(1.0296);transform-origin:left;">R</div>
<div style="position:absolute;left:2033.8px;top:1389.7px;font-family:'Liberation Serif';font-size:22.00px;line-height:1;white-space:nowrap;font-weight:400;font-style:normal;color:#3a3a3a;transform:scaleX(0.9091);transform-origin:left;">3</div>
<div style="position:absolute;left:2056.0px;top:1357.4px;font-family:'Liberation Serif';font-size:47.69px;line-height:1;white-space:nowrap;font-weight:400;font-style:normal;color:#262626;">+</div>
<div style="position:absolute;left:2094.0px;top:1357.8px;font-family:'Liberation Serif';font-size:47.69px;line-height:1;white-space:nowrap;font-weight:400;font-style:italic;color:#262626;">R</div>
<div style="position:absolute;left:2123.0px;top:1388.7px;font-family:'Liberation Serif';font-size:22.00px;line-height:1;white-space:nowrap;font-weight:400;font-style:normal;color:#3a3a3a;transform:scaleX(1.2727);transform-origin:left;">4</div>
<div style="position:absolute;left:1873.8px;top:1450.9px;font-family:'Liberation Serif';font-size:49.23px;line-height:1;white-space:nowrap;font-weight:400;font-style:italic;color:#262626;transform:scaleX(1.0845);transform-origin:left;">k</div>
<div style="position:absolute;left:1895.3px;top:1484.6px;font-family:'Liberation Serif';font-size:23.00px;line-height:1;white-space:nowrap;font-weight:400;font-style:normal;color:#3a3a3a;transform:scaleX(1.3913);transform-origin:left;">0</div>
<div style="position:absolute;left:2035.0px;top:1423.9px;font-family:'Liberation Serif';font-size:50.77px;line-height:1;white-space:nowrap;font-weight:400;font-style:italic;color:#262626;transform:scaleX(0.9328);transform-origin:left;">Q</div>
<div style="position:absolute;left:1969.4px;top:1494.1px;font-family:'Liberation Serif';font-size:40.00px;line-height:1;white-space:nowrap;font-weight:700;font-style:normal;color:#262626;transform:scaleX(1.1011);transform-origin:left;">&omega;</div>
<div style="position:absolute;left:2001.6px;top:1518.7px;font-family:'Liberation Serif';font-size:22.00px;line-height:1;white-space:nowrap;font-weight:400;font-style:normal;color:#3a3a3a;transform:scaleX(1.3636);transform-origin:left;">0</div>
<div style="position:absolute;left:2017.0px;top:1484.1px;font-family:'Liberation Serif';font-size:49.23px;line-height:1;white-space:nowrap;font-weight:400;font-style:normal;color:#262626;">.</div>
<div style="position:absolute;left:2031.7px;top:1484.1px;font-family:'Liberation Serif';font-size:49.23px;line-height:1;white-space:nowrap;font-weight:400;font-style:italic;color:#262626;">R</div>
<div style="position:absolute;left:2061.7px;top:1518.7px;font-family:'Liberation Serif';font-size:22.00px;line-height:1;white-space:nowrap;font-weight:400;font-style:normal;color:#3a3a3a;transform:scaleX(1.0909);transform-origin:left;">3</div>
<div style="position:absolute;left:2074.0px;top:1484.1px;font-family:'Liberation Serif';font-size:49.23px;line-height:1;white-space:nowrap;font-weight:400;font-style:normal;color:#262626;">.</div>
<div style="position:absolute;left:2081.0px;top:1484.1px;font-family:'Liberation Serif';font-size:49.23px;line-height:1;white-space:nowrap;font-weight:400;font-style:italic;color:#262626;transform:scaleX(1.1450);transform-origin:left;">C</div>
<div style="position:absolute;left:2118.6px;top:1518.7px;font-family:'Liberation Serif';font-size:22.00px;line-height:1;white-space:nowrap;font-weight:400;font-style:normal;color:#3a3a3a;transform:scaleX(1.0909);transform-origin:left;">5</div>
<svg style="left:0;top:0" width="3213" height="500" viewBox="0 0 3213 500"><rect x="77.5" y="59" width="26.5" height="26" fill="#fff"/><rect x="81.5" y="62" width="18.5" height="11" fill="#217346"/><rect x="84" y="76.5" width="11.5" height="6.5" fill="#217346"/><rect x="87.5" y="77.5" width="2.5" height="5.5" fill="#fff"/><path d="M146 61 L138.5 68.5 L146 76 M139 68.5 H154 Q165 68.5 165 76.5 Q165 84 156 84" fill="none" stroke="#fff" stroke-width="3.2" stroke-linejoin="round"/><path d="M180 67.5 L189.5 67.5 L184.75 73 Z" fill="#fff"/><path d="M229 61 L236.5 68.5 L229 76 M236 68.5 H221 Q210 68.5 210 76.5 Q210 84 219 84" fill="none" stroke="#5c9e79" stroke-width="3.2" stroke-linejoin="round"/><path d="M252 67.5 L261 67.5 L256.5 73 Z" fill="#4f9270"/><path d="M286 69 L297 58 L308 69 L297 80 Z" fill="none" stroke="#fff" stroke-width="2.2"/><circle cx="296" cy="58" r="3" fill="none" stroke="#fff" stroke-width="1.8"/><path d="M301 62 Q309 62 309 72" fill="none" stroke="#fff" stroke-width="2.2"/><rect x="279" y="80" width="34.5" height="8.5" fill="#f2dc88"/><path d="M324 67 L334.5 67 L329.25 72.5 Z" fill="#fff"/><rect x="362" y="64.5" width="9.5" height="2" fill="#fff"/><path d="M362 69 L371.5 69 L366.75 74.5 Z" fill="#fff"/><path d="M1132 143 Q1132 137 1129 133 Q1126 129 1126 125 A12 12 0 0 1 1150 125 Q1150 129 1147 133 Q1144 137 1144 143 Z" fill="none" stroke="#fff" stroke-width="2.2"/><rect x="1132" y="146" width="12" height="2.5" fill="#fff"/><rect x="1134" y="150.5" width="8" height="2.5" fill="#fff"/><rect x="2851" y="60" width="24.5" height="18.5" fill="none" stroke="#fff" stroke-width="2"/><rect x="2851" y="60" width="24.5" height="4" fill="#fff"/><path d="M2863.3 66 V78 M2858.5 70.5 L2863.3 66 L2868 70.5" fill="none" stroke="#fff" stroke-width="1.8"/><rect x="2948.5" y="67" width="20" height="2" fill="#fff"/><rect x="3042" y="64" width="15" height="15" fill="none" stroke="#fff" stroke-width="2"/><path d="M3046 64 V60 H3061 V75 H3057" fill="none" stroke="#fff" stroke-width="2"/><path d="M3136 59.5 L3156 79 M3156 59.5 L3136 79" stroke="#fff" stroke-width="2"/><circle cx="3070" cy="133" r="9" fill="none" stroke="#fff" stroke-width="2"/><path d="M3057 157 Q3058 144 3070 142.5 Q3075 142.5 3078 144.5" fill="none" stroke="#fff" stroke-width="2"/><path d="M3073 148.7 H3086 M3079.3 141.5 V157" stroke="#fff" stroke-width="2.2"/><rect x="55" y="190" width="46" height="52" fill="#ecc47c"/><rect x="72.5" y="183.5" width="11" height="6.5" fill="#6d6d6d"/><rect x="75.5" y="185" width="5" height="4" fill="#f3f3f3"/><rect x="63" y="189" width="29.5" height="8" fill="#6d6d6d"/><path d="M88 214 H105 L112 221 V246 H88 Z" fill="#fff" stroke="#8c8c8c" stroke-width="2"/><path d="M105 214 V221 H112" fill="none" stroke="#8c8c8c" stroke-width="1.5"/><path d="M74 297 L84.5 297 L79.25 302.5 Z" fill="#555"/><path d="M131 184.5 L145 203.5 M149 184.5 L135 203.5" stroke="#5a5a5a" stroke-width="3"/><circle cx="132.5" cy="208" r="5" fill="none" stroke="#5b8bc7" stroke-width="2.4"/><circle cx="147.2" cy="208" r="5" fill="none" stroke="#5b8bc7" stroke-width="2.4"/><path d="M127 230 H138 L142.5 234.5 V252 H127 Z" fill="#fff" stroke="#8a8a8a" stroke-width="2"/><path d="M130.5 236 H137 M130.5 240.2 H137 M130.5 246 H137" stroke="#4a7ebb" stroke-width="1.8"/><path d="M138 238 H150 L155 243 V260.5 H138 Z" fill="#fff" stroke="#8a8a8a" stroke-width="2"/><path d="M141.5 243.8 H151.5 M141.5 249 H151.5 M141.5 253.7 H151.5" stroke="#4a7ebb" stroke-width="1.8"/><path d="M236 243 L245.5 243 L240.75 249.5 Z" fill="#555"/><path d="M127.5 291.5 L137.5 286 L146.6 296 L139 302.8 Z" fill="#ebbf6a"/><path d="M139 290 L151 279" stroke="#5a5a5a" stroke-width="5"/><circle cx="154" cy="276.5" r="2.6" fill="#5a5a5a"/><path d="M315 331 V345 H331 M315 331 H326" fill="none" stroke="#8a8a8a" stroke-width="1.5"/><path d="M321 336 L330 344 M330 338 V344 H324" fill="none" stroke="#555" stroke-width="1.6"/><path d="M516 213 L527.5 213 L521.75 219 Z" fill="#555"/><path d="M615 213 L626 213 L620.5 219 Z" fill="#555"/><text x="647" y="223.5" font-family="Liberation Sans" font-size="26" fill="#555">A</text><path d="M661 204.5 L665.5 199.5 L670 204.5 Z" fill="#4a7ebb"/><text x="688" y="223.5" font-family="Liberation Sans" font-size="24" fill="#555">A</text><path d="M702 199.5 L711 199.5 L706.5 204.5 Z" fill="#4a7ebb"/><text x="359" y="286.5" font-family="Liberation Sans" font-weight="700" font-size="28" fill="#3c3c3c" transform="translate(359 0) scale(0.85 1) translate(-359 0)">B</text><text x="403" y="286.5" font-family="Liberation Serif" font-style="italic" font-weight="700" font-size="30" fill="#3c3c3c">I</text><text x="444" y="283.5" font-family="Liberation Sans" font-weight="700" font-size="24" fill="#3c3c3c">U</text><rect x="445" y="287.5" width="18" height="2.5" fill="#777"/><path d="M481 275 L491 275 L486.0 280 Z" fill="#555"/><rect x="519.5" y="262" width="27" height="27" fill="#fff" stroke="#7a7a7a" stroke-width="2"/><path d="M533 262 V289 M519.5 275.5 H546.5" stroke="#7a7a7a" stroke-width="2"/><path d="M560 275 L570 275 L565.0 280 Z" fill="#555"/><path d="M601 272 L611 262 L621 272 L611 283 Z" fill="#fff" stroke="#7a7a7a" stroke-width="1.8"/><circle cx="610" cy="261" r="2.5" fill="none" stroke="#7a7a7a" stroke-width="1.5"/><path d="M617 267 Q627 268 626 282" fill="none" stroke="#3f7bc2" stroke-width="3"/><rect x="595.5" y="285" width="33.5" height="8" fill="#fce38a"/><path d="M639 275 L649.5 275 L644.25 280 Z" fill="#555"/><text x="665" y="282.5" font-family="Liberation Sans" font-size="30" fill="#3c3c3c">A</text><rect x="659.5" y="284" width="34" height="8.5" fill="#ff0000"/><path d="M703.5 274.5 L713.5 274.5 L708.5 279.5 Z" fill="#555"/><path d="M704 331 V345 H720 M704 331 H715" fill="none" stroke="#8a8a8a" stroke-width="1.5"/><path d="M710 336 L719 344 M719 338 V344 H713" fill="none" stroke="#555" stroke-width="1.6"/><rect x="741" y="200.5" width="30" height="2" fill="#8a8a8a"/><rect x="744.5" y="205.0" width="23.0" height="2" fill="#8a8a8a"/><rect x="741" y="210.0" width="30" height="2" fill="#8a8a8a"/><rect x="783.5" y="206.5" width="30.0" height="2" fill="#8a8a8a"/><rect x="787" y="211.5" width="23" height="2" fill="#8a8a8a"/><rect x="783.5" y="216.5" width="30.0" height="2" fill="#8a8a8a"/><rect x="787" y="221.5" width="23" height="2" fill="#8a8a8a"/><rect x="826" y="213.0" width="30" height="2" fill="#8a8a8a"/><rect x="829.5" y="218.5" width="23.5" height="2" fill="#8a8a8a"/><rect x="826" y="223.0" width="30" height="2" fill="#8a8a8a"/><rect x="829.5" y="228.5" width="23.5" height="2" fill="#8a8a8a"/><g transform="translate(896 208) rotate(-45)"><text x="-16" y="8" font-family="Liberation Sans" font-size="20" fill="#555">ab</text></g><path d="M891 228 L911 208" stroke="#555" stroke-width="1.8"/><path d="M907 206 L913 205 L912 211 Z" fill="#555"/><path d="M922 213.5 L932 213.5 L927.0 218.5 Z" fill="#555"/><rect x="743.5" y="268.0" width="23.5" height="2" fill="#8a8a8a"/><rect x="785.5" y="268.0" width="26.0" height="2" fill="#8a8a8a"/><rect x="829.5" y="268.0" width="24.0" height="2" fill="#8a8a8a"/><rect x="743.5" y="273.0" width="19.5" height="2" fill="#8a8a8a"/><rect x="790.5" y="273.0" width="16.5" height="2" fill="#8a8a8a"/><rect x="835" y="273.0" width="18.5" height="2" fill="#8a8a8a"/><rect x="743.5" y="278.0" width="23.5" height="2" fill="#8a8a8a"/><rect x="785.5" y="278.0" width="26.0" height="2" fill="#8a8a8a"/><rect x="829.5" y="278.0" width="24.0" height="2" fill="#8a8a8a"/><rect x="743.5" y="283.0" width="19.5" height="2" fill="#8a8a8a"/><rect x="790.5" y="283.0" width="16.5" height="2" fill="#8a8a8a"/><rect x="835" y="283.0" width="18.5" height="2" fill="#8a8a8a"/><rect x="884" y="263.0" width="30" height="2" fill="#8a8a8a"/><rect x="884" y="287.5" width="30" height="2" fill="#8a8a8a"/><rect x="899.5" y="268.0" width="14.5" height="2" fill="#8a8a8a"/><rect x="899.5" y="273.0" width="14.5" height="2" fill="#8a8a8a"/><rect x="899.5" y="278.0" width="14.5" height="2" fill="#8a8a8a"/><rect x="899.5" y="283.0" width="14.5" height="2" fill="#8a8a8a"/><path d="M885 276.5 H897 M890 271 L884.5 276.5 L890 282" fill="none" stroke="#3f7bc2" stroke-width="2.5"/><rect x="927.5" y="263.0" width="29.5" height="2" fill="#8a8a8a"/><rect x="927.5" y="287.5" width="29.5" height="2" fill="#8a8a8a"/><rect x="942.5" y="268.0" width="14.5" height="2" fill="#8a8a8a"/><rect x="942.5" y="273.0" width="14.5" height="2" fill="#8a8a8a"/><rect x="942.5" y="278.0" width="14.5" height="2" fill="#8a8a8a"/><rect x="942.5" y="283.0" width="14.5" height="2" fill="#8a8a8a"/><path d="M928 276.5 H940 M934.5 271 L940 276.5 L934.5 282" fill="none" stroke="#3f7bc2" stroke-width="2.5"/><text x="987" y="214" font-family="Liberation Sans" font-weight="700" font-size="17.5" fill="#555">ab</text><text x="987" y="228.5" font-family="Liberation Sans" font-weight="700" font-size="17.5" fill="#555">c</text><path d="M1000.5 225 H1008 Q1012 225 1012.5 219.5 M1004.5 221 L1000.5 225 L1004.5 229" fill="none" stroke="#3f7bc2" stroke-width="2.4"/><rect x="984" y="260" width="30" height="30" fill="#fff" stroke="#7a7a7a" stroke-width="2"/><path d="M984 268 H1014 M984 282 H1014 M999 260 V268 M999 282 V290" stroke="#7a7a7a" stroke-width="1.6"/><path d="M989 275 H1009 M992 272 L989 275 L992 278 M1006 272 L1009 275 L1006 278" fill="none" stroke="#3f7bc2" stroke-width="1.8"/><path d="M1212 275 L1222 275 L1217.0 280 Z" fill="#555"/><path d="M1214 331 V345 H1230 M1214 331 H1225" fill="none" stroke="#8a8a8a" stroke-width="1.5"/><path d="M1220 336 L1229 344 M1229 338 V344 H1223" fill="none" stroke="#555" stroke-width="1.6"/><path d="M1477 213 L1488 213 L1482.5 219 Z" fill="#555"/><rect x="1250" y="261" width="31.5" height="18" fill="#3f7bc2"/><ellipse cx="1265.5" cy="270" rx="11.5" ry="5.2" fill="#fff"/><circle cx="1265.5" cy="270" r="3" fill="#3f7bc2"/><rect x="1268" y="273" width="13.5" height="5" fill="#f0c47a"/><rect x="1268" y="279" width="13.5" height="4.5" fill="#f6d9a6"/><rect x="1260" y="281" width="12" height="5" fill="#f0c47a"/><rect x="1260" y="287" width="12" height="5.5" fill="#f6d9a6"/><path d="M1292 275 L1302 275 L1297.0 280 Z" fill="#555"/><text x="1316" y="288.5" font-family="Liberation Sans" font-size="33" fill="#5a5a5a" transform="translate(1316 288.5) scale(0.78 1) translate(-1316 -288.5)">%</text><circle cx="1373" cy="273.5" r="4" fill="#555"/><path d="M1376.5 274 Q1377 280 1368.5 283" fill="none" stroke="#555" stroke-width="3"/><text x="1429" y="274.5" font-family="Liberation Sans" font-size="16" fill="#666">.0</text><text x="1419" y="290" font-family="Liberation Sans" font-size="16" fill="#666">.00</text><path d="M1419 269.5 H1431 M1424 265 L1419 269.5 L1424 274" fill="none" stroke="#3f7bc2" stroke-width="2.6"/><text x="1464" y="274.5" font-family="Liberation Sans" font-size="16" fill="#666">.00</text><text x="1472" y="290" font-family="Liberation Sans" font-size="16" fill="#666">.0</text><path d="M1460 283.7 H1471 M1467 279.2 L1471.5 283.7 L1467 288.2" fill="none" stroke="#3f7bc2" stroke-width="2.6"/><path d="M1479 331 V345 H1495 M1479 331 H1490" fill="none" stroke="#8a8a8a" stroke-width="1.5"/><path d="M1485 336 L1494 344 M1494 338 V344 H1488" fill="none" stroke="#555" stroke-width="1.6"/><rect x="1555" y="191" width="56" height="45" fill="#fff" stroke="#8a8a8a" stroke-width="1.8"/><path d="M1555 202 H1611 M1555 213 H1611 M1555 224 H1611 M1572 191 V236 M1592 191 V236" stroke="#b0b0b0" stroke-width="1.5"/><rect x="1573" y="192" width="11" height="10" fill="#e3643a"/><rect x="1573" y="203" width="18" height="10" fill="#3f7bc2"/><rect x="1573" y="214" width="15" height="10" fill="#e3643a"/><rect x="1573" y="225" width="8" height="10" fill="#3f7bc2"/><rect x="1584.5" y="222" width="31" height="24" fill="#fff" stroke="#8a8a8a" stroke-width="1.8"/><text x="1592" y="242" font-family="Liberation Sans" font-size="20" fill="#555">&#8800;</text><path d="M1641 297.5 L1650 297.5 L1645.5 303.5 Z" fill="#555"/><rect x="1685" y="190" width="54" height="48" fill="#fff" stroke="#8a8a8a" stroke-width="1.8"/><rect x="1698" y="201" width="41" height="37" fill="#bcd3ec"/><path d="M1685 201 H1739 M1685 212 H1739 M1685 223 H1739 M1698 190 V238 M1712 190 V238 M1726 190 V238" stroke="#a0a0a0" stroke-width="1.5"/><path d="M1704 246 Q1706 236 1716 232 L1722 238 Q1718 246 1704 246 Z" fill="#3f7bc2"/><path d="M1721 232 L1745 206" stroke="#6a6a6a" stroke-width="6.5"/><path d="M1740 297.5 L1749 297.5 L1744.5 303.5 Z" fill="#555"/><path d="M2444 205 L2447 202 L2450 205 Z" fill="#bbb"/><path d="M2444 243 L2452 243 L2448.0 247 Z" fill="#666"/><rect x="2444" y="280" width="8" height="1.5" fill="#666"/><path d="M2444 284 L2452 284 L2448.0 288 Z" fill="#666"/><rect x="2498" y="185.5" width="32" height="11" fill="#fff" stroke="#8a8a8a" stroke-width="1.8"/><path d="M2514.0 185.5 V196.5" stroke="#8a8a8a" stroke-width="1.5"/><rect x="2498" y="222" width="32" height="20.5" fill="#fff" stroke="#8a8a8a" stroke-width="1.8"/><path d="M2514.0 222 V242.5" stroke="#8a8a8a" stroke-width="1.5"/><path d="M2498 232.25 H2530" stroke="#8a8a8a" stroke-width="1.5"/><rect x="2522" y="203.5" width="31" height="11" fill="#bcd3ec" stroke="#7f7f7f" stroke-width="1.6"/><path d="M2537.5 203.5 V214.5" stroke="#7f7f7f" stroke-width="1.6"/><path d="M2496 209 H2518 M2504.5 201 L2496 209 L2504.5 217" fill="none" stroke="#3f7bc2" stroke-width="3.2"/><path d="M2520 300 L2530 300 L2525.0 305 Z" fill="#555"/><rect x="2581" y="185.5" width="31" height="11" fill="#fff" stroke="#8a8a8a" stroke-width="1.8"/><path d="M2596.5 185.5 V196.5" stroke="#8a8a8a" stroke-width="1.5"/><rect x="2581" y="219.5" width="31" height="20.5" fill="#fff" stroke="#8a8a8a" stroke-width="1.8"/><path d="M2596.5 219.5 V240.0" stroke="#8a8a8a" stroke-width="1.5"/><path d="M2581 229.75 H2612" stroke="#8a8a8a" stroke-width="1.5"/><rect x="2592.5" y="202" width="18" height="11" fill="#bcd3ec" stroke="#7f7f7f" stroke-width="1.6"/><path d="M2611 196.5 L2637.5 222 M2637.5 196.5 L2611 222" stroke="#e3643a" stroke-width="3.4"/><path d="M2603 300 L2612 300 L2607.5 305 Z" fill="#555"/><rect x="2663" y="197.5" width="56.5" height="40.5" fill="#fff" stroke="#8a8a8a" stroke-width="1.8"/><path d="M2663 207.6 H2719.5 M2663 228 H2719.5 M2677.5 197.5 V238 M2692.5 197.5 V238 M2707 197.5 V238" stroke="#a8a8a8" stroke-width="1.6"/><rect x="2678.5" y="209" width="14" height="17.5" fill="#3f7bc2"/><path d="M2663 238 V244.5 H2682 L2685 238 M2688 244.5 H2700 L2703 238" fill="none" stroke="#8a8a8a" stroke-width="1.6"/><path d="M2666 188.7 H2707 M2672 183.5 L2666 188.7 L2672 194 M2701 183.5 L2707 188.7 L2701 194" fill="none" stroke="#3f7bc2" stroke-width="3"/><path d="M2663 183 V194.5 M2710 183 V194.5" stroke="#9bbbe0" stroke-width="2"/><path d="M2686.5 300 L2695.5 300 L2691.0 305 Z" fill="#555"/><path d="M2781 185 H2758.5 L2771 197.5 L2758.5 210 H2781" fill="none" stroke="#3c3c3c" stroke-width="3"/><path d="M2909 195 L2918 195 L2913.5 201 Z" fill="#555"/><rect x="2756" y="228" width="27" height="27" fill="#fff" stroke="#7a7a7a" stroke-width="2"/><rect x="2756" y="228" width="27" height="4" fill="#7a7a7a"/><path d="M2769.5 235 V249 M2764 244 L2769.5 250 L2775 244" fill="none" stroke="#3f7bc2" stroke-width="3"/><path d="M2830 240 L2839 240 L2834.5 246 Z" fill="#555"/><path d="M2760 290 L2776 275 Q2778 273 2781 276 L2783 279 Q2784 281 2782 283 L2766 298 Q2764 300 2761 297 L2759 295 Q2757 293 2760 290 Z" fill="#e97b97"/><path d="M2855 285 L2864 285 L2859.5 291 Z" fill="#555"/><path d="M2941.5 210 L2950 188.5 L2958.5 210 M2944.5 202 H2955.5" fill="none" stroke="#3a75bf" stroke-width="3.5"/><path d="M2941.5 217 H2957.5 L2942 237 H2958.5" fill="none" stroke="#9b55c0" stroke-width="3.5" stroke-linejoin="miter"/><path d="M2966 199 H2996 V201 L2984 212.5 V226.5 H2976.5 V212.5 L2966 201 Z" fill="#707070"/><rect x="2977" y="212" width="4" height="14" fill="#b8b8b8"/><path d="M2993 297.5 L3001.5 297.5 L2997.25 303 Z" fill="#555"/><circle cx="3061.2" cy="206" r="18.5" fill="#fff" stroke="#3f7bc2" stroke-width="4"/><path d="M3046.5 221 L3031.5 236.5" stroke="#4a80bd" stroke-width="6.5" stroke-linecap="round"/><path d="M3085 297.5 L3094 297.5 L3089.5 303 Z" fill="#555"/><path d="M3159 342 L3166.5 334 L3174 342" fill="none" stroke="#666" stroke-width="2"/><path d="M224 396.5 L235.5 396.5 L229.75 403 Z" fill="#555"/><rect x="278.5" y="388.5" width="4.2" height="4" fill="#9a9a9a"/><rect x="278.5" y="397" width="4.2" height="4" fill="#9a9a9a"/><rect x="278.5" y="405.5" width="4.2" height="4" fill="#9a9a9a"/><path d="M337 390 L359 411 M359 390 L337 411" stroke="#b5b5b5" stroke-width="2.2"/><path d="M411 401 L419 410 L437 390" fill="none" stroke="#b5b5b5" stroke-width="2.5"/><text x="482" y="409" font-family="Liberation Serif" font-style="italic" font-size="30" fill="#444">f</text><text x="494" y="411" font-family="Liberation Serif" font-style="italic" font-size="22" fill="#444">x</text><path d="M3160 396 L3166 402 L3172 396" fill="none" stroke="#555" stroke-width="2.2"/></svg>
<svg style="left:0;top:0" width="3213" height="1626" viewBox="0 0 3213 1626"><path d="M168 1270 L177 1280 L200 1255" fill="none" stroke="#1e1e1e" stroke-width="4.2" stroke-linecap="round"/><rect x="386.7" y="1279.1" width="28.69999999999999" height="2.8" fill="#b8b8b8"/><rect x="496.7" y="1268.9" width="30.30000000000001" height="3.2" fill="#4a4a4a"/><rect x="496.7" y="1280.9" width="30.30000000000001" height="3.2" fill="#4a4a4a"/><rect x="541.3" y="1278.5" width="173.70000000000005" height="7" fill="#6e6e6e"/><path d="M546 1318 L551 1315 L562 1339 L578 1295 H712" fill="none" stroke="#333" stroke-width="2.8" stroke-linejoin="miter"/><rect x="826.5" y="1268.9" width="28.700000000000045" height="3.2" fill="#4a4a4a"/><rect x="826.5" y="1280.9" width="28.700000000000045" height="3.2" fill="#4a4a4a"/><path d="M868 1275 L873 1272 L882 1296.6 L902 1244.6 H1036.6" fill="none" stroke="#333" stroke-width="2.8" stroke-linejoin="miter"/><rect x="1153.2" y="1272.0" width="28.299999999999955" height="3.2" fill="#4a4a4a"/><rect x="1153.2" y="1283.4" width="28.299999999999955" height="3.2" fill="#4a4a4a"/><rect x="1195.6" y="1279.0" width="174.9000000000001" height="7" fill="#6e6e6e"/><path d="M1199 1318 L1204 1315 L1214 1339 L1231 1289.5 H1370" fill="none" stroke="#333" stroke-width="2.8" stroke-linejoin="miter"/><rect x="1481.7" y="1272.0" width="26.5" height="3.2" fill="#4a4a4a"/><rect x="1481.7" y="1283.4" width="26.5" height="3.2" fill="#4a4a4a"/><rect x="1524" y="1279.25" width="176.79999999999995" height="3.5" fill="#444"/><path d="M1527.6 1245 L1532.6 1242 L1543 1266.5 L1559.5 1212 H1697" fill="none" stroke="#333" stroke-width="2.8" stroke-linejoin="miter"/><rect x="1934" y="1091.0" width="30" height="4" fill="#4a4a4a"/><rect x="1934" y="1100.7" width="30" height="4" fill="#4a4a4a"/><path d="M1973.7 1115 L1978.7 1112 L1992 1160.6 L2004.8 1036 H2236.7" fill="none" stroke="#333" stroke-width="3.5" stroke-linejoin="miter"/><rect x="2008" y="1096.4" width="225.5" height="4" fill="#3a3a3a"/><rect x="1929.7" y="1224.0" width="24.700000000000045" height="4" fill="#4a4a4a"/><rect x="1929.7" y="1233.8" width="24.700000000000045" height="4" fill="#4a4a4a"/><rect x="1967.2" y="1229.5" width="59.09999999999991" height="4" fill="#3a3a3a"/><rect x="1919" y="1341.7" width="29" height="4" fill="#4a4a4a"/><rect x="1919" y="1352.4" width="29" height="4" fill="#4a4a4a"/><rect x="1956.5" y="1348.0" width="230.80000000000018" height="4" fill="#3a3a3a"/><rect x="1926.5" y="1472.7" width="26.799999999999955" height="4" fill="#4a4a4a"/><rect x="1926.5" y="1483.4" width="26.799999999999955" height="4" fill="#4a4a4a"/><rect x="1964" y="1477.0" width="176" height="4" fill="#3a3a3a"/></svg>
</body></html>
